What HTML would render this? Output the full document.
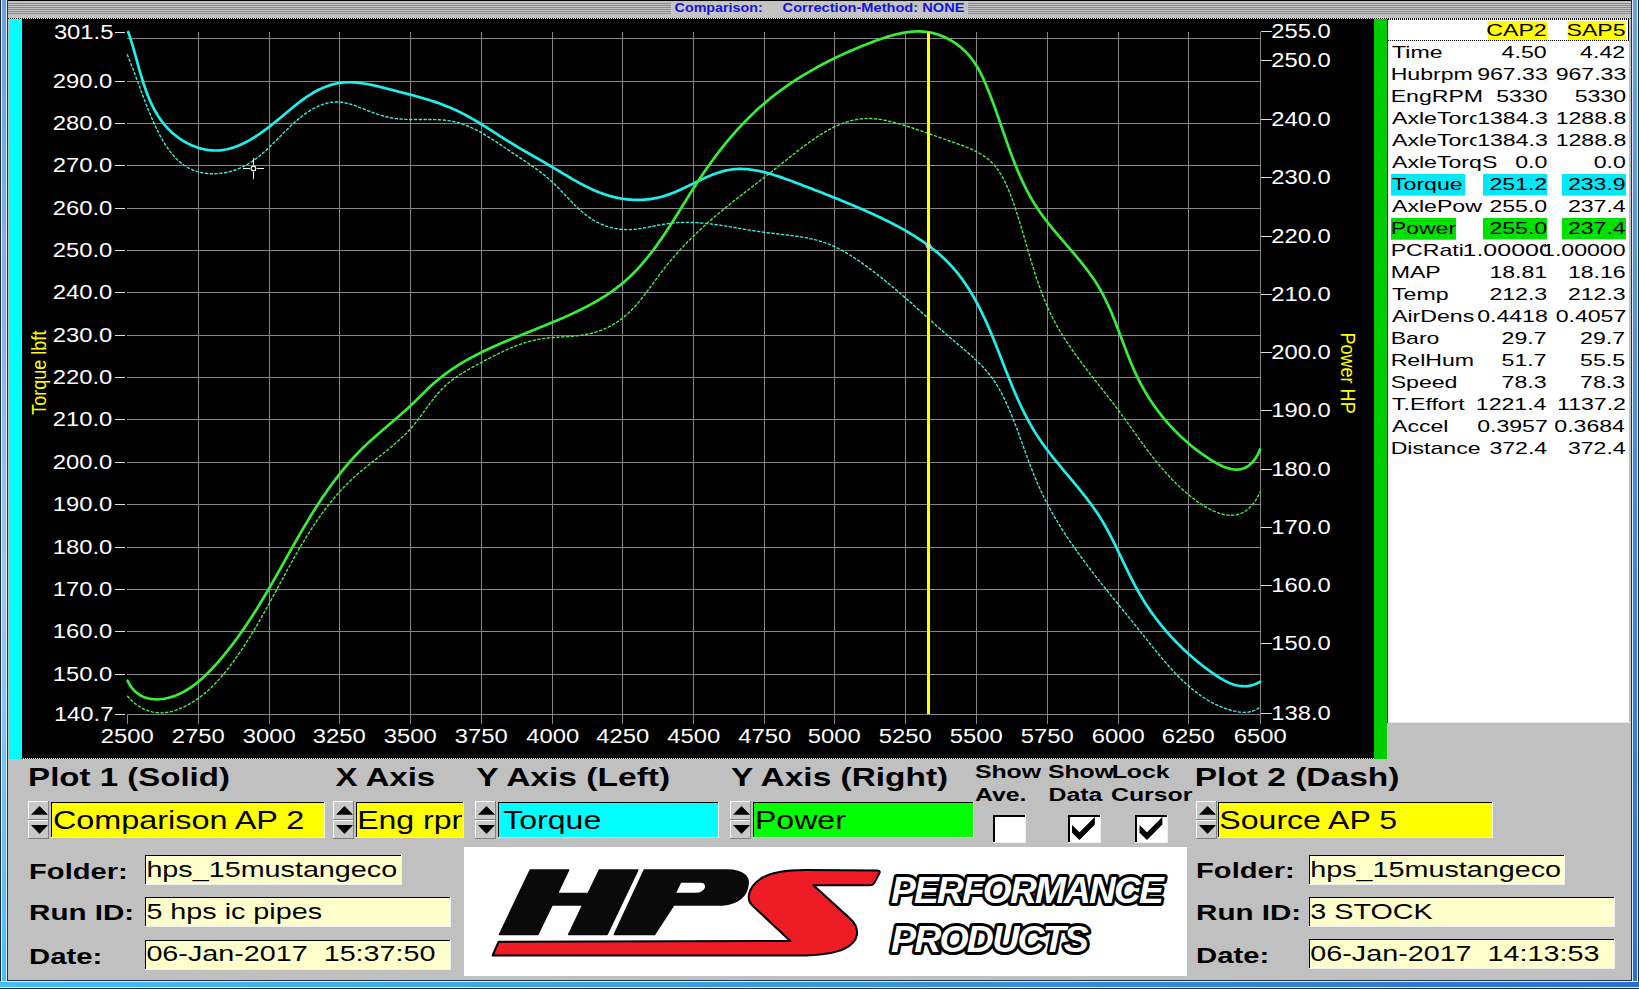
<!DOCTYPE html><html><head><meta charset="utf-8"><style>html,body{margin:0;padding:0;width:1639px;height:989px;overflow:hidden;background:#c0c0c0}</style></head><body><svg width="1639" height="989" viewBox="0 0 1639 989" style="position:absolute;left:0;top:0;white-space:pre;font-family:'Liberation Sans',sans-serif">
<defs><pattern id="stripes" x="0" y="1" width="4" height="2" patternUnits="userSpaceOnUse"><rect width="4" height="1" fill="#9a9a9a"/><rect y="1" width="4" height="1" fill="#d6d6d6"/></pattern><pattern id="dots" x="0" y="0" width="2" height="2" patternUnits="userSpaceOnUse"><rect width="1" height="2" fill="#000"/><rect x="1" width="1" height="2" fill="#e8e8e8"/></pattern><linearGradient id="lb" x1="0" y1="0" x2="0" y2="1"><stop offset="0" stop-color="#6d9fdc"/><stop offset="0.6" stop-color="#9ec6ea"/><stop offset="1" stop-color="#48bdf4"/></linearGradient><linearGradient id="bb" x1="0" y1="0" x2="1" y2="0"><stop offset="0" stop-color="#48bdf4"/><stop offset="1" stop-color="#2a72cc"/></linearGradient><linearGradient id="rb" x1="0" y1="0" x2="0" y2="1"><stop offset="0" stop-color="#6d9fdc"/><stop offset="1" stop-color="#2a72cc"/></linearGradient><clipPath id="plotclip"><rect x="22" y="19" width="1352" height="740"/></clipPath></defs>
<g shape-rendering="crispEdges">
<rect x="0" y="0" width="1639" height="989" fill="#c0c0c0" />
<rect x="0" y="0" width="8" height="989" fill="url(#lb)" />
<rect x="0" y="0" width="1" height="989" fill="#1a2a40" />
<rect x="1" y="0" width="1" height="989" fill="#d8f0ff" />
<rect x="6" y="0" width="1" height="989" fill="#d8f0ff" />
<rect x="7" y="0" width="1" height="989" fill="#203050" />
<rect x="1631" y="0" width="8" height="989" fill="url(#rb)" />
<rect x="1631" y="0" width="1" height="989" fill="#203050" />
<rect x="1632" y="0" width="1" height="989" fill="#d8f0ff" />
<rect x="1637" y="0" width="1" height="989" fill="#d8f0ff" />
<rect x="1638" y="0" width="1" height="989" fill="#1a2a40" />
<rect x="0" y="981" width="1639" height="8" fill="url(#bb)" />
<rect x="7" y="980" width="1625" height="1" fill="#203050" />
<rect x="1" y="981" width="1637" height="1" fill="#d8f0ff" />
<rect x="0" y="987" width="1639" height="1" fill="#d8f0ff" />
<rect x="0" y="988" width="1639" height="1" fill="#1a2a40" />
<rect x="8" y="0" width="1623" height="1" fill="#000" />
<rect x="8" y="1" width="1623" height="17" fill="#c2c2c2" />
<rect x="8" y="3" width="1623" height="1" fill="#8c8c8c" />
<rect x="8" y="5" width="1623" height="1" fill="#8c8c8c" />
<rect x="8" y="7" width="1623" height="1" fill="#8c8c8c" />
<rect x="8" y="9" width="1623" height="1" fill="#8c8c8c" />
<rect x="8" y="11" width="1623" height="1" fill="#8c8c8c" />
<rect x="8" y="13" width="1623" height="1" fill="#8c8c8c" />
<rect x="8" y="18" width="1623" height="1" fill="url(#dots)" />
<rect x="671" y="1" width="297" height="15" fill="#c4c4c4" />
</g>
<text transform="translate(674.60,11.70) scale(1.1000,1)" font-size="13" font-weight="bold" font-style="normal" fill="#1414d8" text-anchor="start" xml:space="preserve">Comparison:</text>
<text transform="translate(782.60,11.70) scale(1.1242,1)" font-size="13" font-weight="bold" font-style="normal" fill="#1414d8" text-anchor="start" xml:space="preserve">Correction-Method: NONE</text>
<g shape-rendering="crispEdges">
<rect x="9" y="19" width="13" height="740" fill="#00ffff" />
<rect x="22" y="19" width="1352" height="740" fill="#000" />
<rect x="1374" y="19" width="13" height="740" fill="#00cc00" />
<rect x="22" y="758" width="1352" height="1" fill="url(#dots)" />
<rect x="127" y="714" width="1" height="10" fill="#858585" />
<rect x="198" y="32" width="1" height="692" fill="#858585" />
<rect x="269" y="32" width="1" height="692" fill="#858585" />
<rect x="339" y="32" width="1" height="692" fill="#858585" />
<rect x="410" y="32" width="1" height="692" fill="#858585" />
<rect x="481" y="32" width="1" height="692" fill="#858585" />
<rect x="552" y="32" width="1" height="692" fill="#858585" />
<rect x="622" y="32" width="1" height="692" fill="#858585" />
<rect x="693" y="32" width="1" height="692" fill="#858585" />
<rect x="764" y="32" width="1" height="692" fill="#858585" />
<rect x="834" y="32" width="1" height="692" fill="#858585" />
<rect x="905" y="32" width="1" height="692" fill="#858585" />
<rect x="976" y="32" width="1" height="692" fill="#858585" />
<rect x="1047" y="32" width="1" height="692" fill="#858585" />
<rect x="1118" y="32" width="1" height="692" fill="#858585" />
<rect x="1188" y="32" width="1" height="692" fill="#858585" />
<rect x="1260" y="32" width="1" height="692" fill="#858585" />
<rect x="115" y="32" width="10" height="1" fill="#e0e0e0" />
<rect x="127" y="38" width="1134" height="1" fill="#858585" />
<rect x="127" y="81" width="1134" height="1" fill="#858585" />
<rect x="115" y="81" width="10" height="1" fill="#e0e0e0" />
<rect x="127" y="123" width="1134" height="1" fill="#858585" />
<rect x="115" y="123" width="10" height="1" fill="#e0e0e0" />
<rect x="127" y="165" width="1134" height="1" fill="#858585" />
<rect x="115" y="165" width="10" height="1" fill="#e0e0e0" />
<rect x="127" y="208" width="1134" height="1" fill="#858585" />
<rect x="115" y="208" width="10" height="1" fill="#e0e0e0" />
<rect x="127" y="250" width="1134" height="1" fill="#858585" />
<rect x="115" y="250" width="10" height="1" fill="#e0e0e0" />
<rect x="127" y="292" width="1134" height="1" fill="#858585" />
<rect x="115" y="292" width="10" height="1" fill="#e0e0e0" />
<rect x="127" y="335" width="1134" height="1" fill="#858585" />
<rect x="115" y="335" width="10" height="1" fill="#e0e0e0" />
<rect x="127" y="377" width="1134" height="1" fill="#858585" />
<rect x="115" y="377" width="10" height="1" fill="#e0e0e0" />
<rect x="127" y="419" width="1134" height="1" fill="#858585" />
<rect x="115" y="419" width="10" height="1" fill="#e0e0e0" />
<rect x="127" y="462" width="1134" height="1" fill="#858585" />
<rect x="115" y="462" width="10" height="1" fill="#e0e0e0" />
<rect x="127" y="504" width="1134" height="1" fill="#858585" />
<rect x="115" y="504" width="10" height="1" fill="#e0e0e0" />
<rect x="127" y="547" width="1134" height="1" fill="#858585" />
<rect x="115" y="547" width="10" height="1" fill="#e0e0e0" />
<rect x="127" y="589" width="1134" height="1" fill="#858585" />
<rect x="115" y="589" width="10" height="1" fill="#e0e0e0" />
<rect x="127" y="631" width="1134" height="1" fill="#858585" />
<rect x="115" y="631" width="10" height="1" fill="#e0e0e0" />
<rect x="127" y="674" width="1134" height="1" fill="#858585" />
<rect x="115" y="674" width="10" height="1" fill="#e0e0e0" />
<rect x="127" y="714" width="1134" height="1" fill="#858585" />
<rect x="115" y="714" width="10" height="1" fill="#e0e0e0" />
<rect x="1261" y="31" width="11" height="1" fill="#e0e0e0" />
<rect x="1261" y="60" width="11" height="1" fill="#e0e0e0" />
<rect x="1261" y="119" width="11" height="1" fill="#e0e0e0" />
<rect x="1261" y="177" width="11" height="1" fill="#e0e0e0" />
<rect x="1261" y="236" width="11" height="1" fill="#e0e0e0" />
<rect x="1261" y="294" width="11" height="1" fill="#e0e0e0" />
<rect x="1261" y="352" width="11" height="1" fill="#e0e0e0" />
<rect x="1261" y="410" width="11" height="1" fill="#e0e0e0" />
<rect x="1261" y="469" width="11" height="1" fill="#e0e0e0" />
<rect x="1261" y="527" width="11" height="1" fill="#e0e0e0" />
<rect x="1261" y="585" width="11" height="1" fill="#e0e0e0" />
<rect x="1261" y="643" width="11" height="1" fill="#e0e0e0" />
<rect x="1261" y="713" width="11" height="1" fill="#e0e0e0" />
</g>
<text transform="translate(53.89,38.50) scale(1.1900,1)" font-size="20" font-weight="normal" font-style="normal" fill="#ffffff" text-anchor="start" xml:space="preserve">301.5</text>
<text transform="translate(52.70,87.50) scale(1.1900,1)" font-size="20" font-weight="normal" font-style="normal" fill="#ffffff" text-anchor="start" xml:space="preserve">290.0</text>
<text transform="translate(52.70,129.50) scale(1.1900,1)" font-size="20" font-weight="normal" font-style="normal" fill="#ffffff" text-anchor="start" xml:space="preserve">280.0</text>
<text transform="translate(52.70,171.50) scale(1.1900,1)" font-size="20" font-weight="normal" font-style="normal" fill="#ffffff" text-anchor="start" xml:space="preserve">270.0</text>
<text transform="translate(52.70,214.50) scale(1.1900,1)" font-size="20" font-weight="normal" font-style="normal" fill="#ffffff" text-anchor="start" xml:space="preserve">260.0</text>
<text transform="translate(52.70,256.50) scale(1.1900,1)" font-size="20" font-weight="normal" font-style="normal" fill="#ffffff" text-anchor="start" xml:space="preserve">250.0</text>
<text transform="translate(52.70,298.50) scale(1.1900,1)" font-size="20" font-weight="normal" font-style="normal" fill="#ffffff" text-anchor="start" xml:space="preserve">240.0</text>
<text transform="translate(52.70,341.50) scale(1.1900,1)" font-size="20" font-weight="normal" font-style="normal" fill="#ffffff" text-anchor="start" xml:space="preserve">230.0</text>
<text transform="translate(52.70,383.50) scale(1.1900,1)" font-size="20" font-weight="normal" font-style="normal" fill="#ffffff" text-anchor="start" xml:space="preserve">220.0</text>
<text transform="translate(52.70,425.50) scale(1.1900,1)" font-size="20" font-weight="normal" font-style="normal" fill="#ffffff" text-anchor="start" xml:space="preserve">210.0</text>
<text transform="translate(52.70,468.50) scale(1.1900,1)" font-size="20" font-weight="normal" font-style="normal" fill="#ffffff" text-anchor="start" xml:space="preserve">200.0</text>
<text transform="translate(52.70,510.50) scale(1.1900,1)" font-size="20" font-weight="normal" font-style="normal" fill="#ffffff" text-anchor="start" xml:space="preserve">190.0</text>
<text transform="translate(52.70,553.50) scale(1.1900,1)" font-size="20" font-weight="normal" font-style="normal" fill="#ffffff" text-anchor="start" xml:space="preserve">180.0</text>
<text transform="translate(52.70,595.50) scale(1.1900,1)" font-size="20" font-weight="normal" font-style="normal" fill="#ffffff" text-anchor="start" xml:space="preserve">170.0</text>
<text transform="translate(52.70,637.50) scale(1.1900,1)" font-size="20" font-weight="normal" font-style="normal" fill="#ffffff" text-anchor="start" xml:space="preserve">160.0</text>
<text transform="translate(52.70,680.50) scale(1.1900,1)" font-size="20" font-weight="normal" font-style="normal" fill="#ffffff" text-anchor="start" xml:space="preserve">150.0</text>
<text transform="translate(53.89,720.50) scale(1.1900,1)" font-size="20" font-weight="normal" font-style="normal" fill="#ffffff" text-anchor="start" xml:space="preserve">140.7</text>
<text transform="translate(1271.31,38.00) scale(1.1900,1)" font-size="20" font-weight="normal" font-style="normal" fill="#ffffff" text-anchor="start" xml:space="preserve">255.0</text>
<text transform="translate(1271.31,67.00) scale(1.1900,1)" font-size="20" font-weight="normal" font-style="normal" fill="#ffffff" text-anchor="start" xml:space="preserve">250.0</text>
<text transform="translate(1271.31,126.00) scale(1.1900,1)" font-size="20" font-weight="normal" font-style="normal" fill="#ffffff" text-anchor="start" xml:space="preserve">240.0</text>
<text transform="translate(1271.31,184.00) scale(1.1900,1)" font-size="20" font-weight="normal" font-style="normal" fill="#ffffff" text-anchor="start" xml:space="preserve">230.0</text>
<text transform="translate(1271.31,243.00) scale(1.1900,1)" font-size="20" font-weight="normal" font-style="normal" fill="#ffffff" text-anchor="start" xml:space="preserve">220.0</text>
<text transform="translate(1271.31,301.00) scale(1.1900,1)" font-size="20" font-weight="normal" font-style="normal" fill="#ffffff" text-anchor="start" xml:space="preserve">210.0</text>
<text transform="translate(1271.31,359.00) scale(1.1900,1)" font-size="20" font-weight="normal" font-style="normal" fill="#ffffff" text-anchor="start" xml:space="preserve">200.0</text>
<text transform="translate(1271.31,417.00) scale(1.1900,1)" font-size="20" font-weight="normal" font-style="normal" fill="#ffffff" text-anchor="start" xml:space="preserve">190.0</text>
<text transform="translate(1271.31,476.00) scale(1.1900,1)" font-size="20" font-weight="normal" font-style="normal" fill="#ffffff" text-anchor="start" xml:space="preserve">180.0</text>
<text transform="translate(1271.31,534.00) scale(1.1900,1)" font-size="20" font-weight="normal" font-style="normal" fill="#ffffff" text-anchor="start" xml:space="preserve">170.0</text>
<text transform="translate(1271.31,592.00) scale(1.1900,1)" font-size="20" font-weight="normal" font-style="normal" fill="#ffffff" text-anchor="start" xml:space="preserve">160.0</text>
<text transform="translate(1271.31,650.00) scale(1.1900,1)" font-size="20" font-weight="normal" font-style="normal" fill="#ffffff" text-anchor="start" xml:space="preserve">150.0</text>
<text transform="translate(1271.31,720.00) scale(1.1900,1)" font-size="20" font-weight="normal" font-style="normal" fill="#ffffff" text-anchor="start" xml:space="preserve">138.0</text>
<text transform="translate(100.72,743.30) scale(1.1900,1)" font-size="20" font-weight="normal" font-style="normal" fill="#ffffff" text-anchor="start" xml:space="preserve">2500</text>
<text transform="translate(171.72,743.30) scale(1.1900,1)" font-size="20" font-weight="normal" font-style="normal" fill="#ffffff" text-anchor="start" xml:space="preserve">2750</text>
<text transform="translate(242.72,743.30) scale(1.1900,1)" font-size="20" font-weight="normal" font-style="normal" fill="#ffffff" text-anchor="start" xml:space="preserve">3000</text>
<text transform="translate(312.73,743.30) scale(1.1900,1)" font-size="20" font-weight="normal" font-style="normal" fill="#ffffff" text-anchor="start" xml:space="preserve">3250</text>
<text transform="translate(383.73,743.30) scale(1.1900,1)" font-size="20" font-weight="normal" font-style="normal" fill="#ffffff" text-anchor="start" xml:space="preserve">3500</text>
<text transform="translate(454.73,743.30) scale(1.1900,1)" font-size="20" font-weight="normal" font-style="normal" fill="#ffffff" text-anchor="start" xml:space="preserve">3750</text>
<text transform="translate(526.32,743.30) scale(1.1900,1)" font-size="20" font-weight="normal" font-style="normal" fill="#ffffff" text-anchor="start" xml:space="preserve">4000</text>
<text transform="translate(596.32,743.30) scale(1.1900,1)" font-size="20" font-weight="normal" font-style="normal" fill="#ffffff" text-anchor="start" xml:space="preserve">4250</text>
<text transform="translate(667.32,743.30) scale(1.1900,1)" font-size="20" font-weight="normal" font-style="normal" fill="#ffffff" text-anchor="start" xml:space="preserve">4500</text>
<text transform="translate(738.32,743.30) scale(1.1900,1)" font-size="20" font-weight="normal" font-style="normal" fill="#ffffff" text-anchor="start" xml:space="preserve">4750</text>
<text transform="translate(807.73,743.30) scale(1.1900,1)" font-size="20" font-weight="normal" font-style="normal" fill="#ffffff" text-anchor="start" xml:space="preserve">5000</text>
<text transform="translate(878.73,743.30) scale(1.1900,1)" font-size="20" font-weight="normal" font-style="normal" fill="#ffffff" text-anchor="start" xml:space="preserve">5250</text>
<text transform="translate(949.73,743.30) scale(1.1900,1)" font-size="20" font-weight="normal" font-style="normal" fill="#ffffff" text-anchor="start" xml:space="preserve">5500</text>
<text transform="translate(1020.73,743.30) scale(1.1900,1)" font-size="20" font-weight="normal" font-style="normal" fill="#ffffff" text-anchor="start" xml:space="preserve">5750</text>
<text transform="translate(1091.72,743.30) scale(1.1900,1)" font-size="20" font-weight="normal" font-style="normal" fill="#ffffff" text-anchor="start" xml:space="preserve">6000</text>
<text transform="translate(1161.72,743.30) scale(1.1900,1)" font-size="20" font-weight="normal" font-style="normal" fill="#ffffff" text-anchor="start" xml:space="preserve">6250</text>
<text transform="translate(1233.72,743.30) scale(1.1900,1)" font-size="20" font-weight="normal" font-style="normal" fill="#ffffff" text-anchor="start" xml:space="preserve">6500</text>
<text transform="translate(46.3,414.9) rotate(-90) scale(0.86,1)" font-size="21" fill="#ffff00">Torque lbft</text>
<text transform="translate(1340.5,332.4) rotate(90) scale(0.86,1)" font-size="21" fill="#ffff00">Power HP</text>
<g clip-path="url(#plotclip)" fill="none" stroke-linejoin="round" stroke-linecap="round">
<path d="M127.30,54.80 L127.90,56.25 L128.49,57.68 L129.08,59.11 L129.65,60.53 L130.22,61.95 L130.78,63.36 L131.33,64.76 L131.88,66.16 L132.42,67.55 L132.95,68.94 L133.48,70.32 L134.00,71.70 L134.52,73.08 L135.03,74.45 L135.54,75.82 L136.05,77.19 L136.56,78.55 L137.06,79.92 L137.56,81.28 L138.06,82.63 L138.55,83.99 L139.05,85.35 L139.55,86.71 L140.04,88.06 L140.54,89.42 L141.04,90.78 L141.54,92.13 L142.04,93.49 L142.55,94.86 L143.06,96.22 L143.57,97.58 L144.08,98.95 L144.60,100.32 L145.13,101.69 L145.65,103.07 L146.19,104.45 L146.73,105.84 L147.28,107.23 L147.83,108.62 L148.39,110.02 L148.96,111.42 L149.54,112.83 L150.12,114.25 L150.72,115.67 L151.32,117.10 L151.94,118.54 L152.56,119.98 L153.19,121.43 L153.84,122.87 L154.50,124.32 L155.16,125.77 L155.84,127.22 L156.53,128.67 L157.24,130.11 L157.95,131.55 L158.68,132.98 L159.42,134.41 L160.17,135.83 L160.94,137.24 L161.72,138.64 L162.52,140.02 L163.32,141.40 L164.15,142.76 L164.99,144.11 L165.84,145.44 L166.71,146.75 L167.59,148.04 L168.49,149.32 L169.41,150.57 L170.34,151.80 L171.29,153.01 L172.26,154.19 L173.25,155.35 L174.25,156.48 L175.27,157.58 L176.30,158.66 L177.36,159.70 L178.44,160.71 L179.53,161.69 L180.64,162.64 L181.78,163.55 L182.93,164.42 L184.10,165.26 L185.29,166.05 L186.51,166.81 L187.74,167.53 L188.99,168.20 L190.27,168.84 L191.56,169.44 L192.87,169.99 L194.19,170.51 L195.53,170.99 L196.89,171.43 L198.26,171.83 L199.64,172.19 L201.03,172.51 L202.44,172.80 L203.85,173.05 L205.28,173.26 L206.71,173.44 L208.15,173.58 L209.60,173.68 L211.05,173.75 L212.51,173.78 L213.97,173.78 L215.44,173.74 L216.91,173.67 L218.38,173.57 L219.85,173.43 L221.32,173.25 L222.79,173.05 L224.25,172.81 L225.72,172.53 L227.18,172.23 L228.63,171.89 L230.08,171.53 L231.53,171.13 L232.96,170.69 L234.39,170.23 L235.81,169.74 L237.22,169.22 L238.61,168.67 L240.00,168.09 L241.37,167.47 L242.73,166.83 L244.08,166.17 L245.41,165.47 L246.72,164.74 L248.02,163.99 L249.31,163.22 L250.58,162.41 L251.84,161.59 L253.09,160.74 L254.32,159.87 L255.55,158.98 L256.76,158.07 L257.96,157.14 L259.15,156.19 L260.33,155.22 L261.51,154.24 L262.67,153.24 L263.83,152.23 L264.98,151.20 L266.12,150.16 L267.25,149.12 L268.39,148.05 L269.51,146.98 L270.63,145.91 L271.75,144.82 L272.86,143.73 L273.97,142.63 L275.08,141.52 L276.18,140.41 L277.29,139.30 L278.39,138.19 L279.49,137.08 L280.59,135.96 L281.70,134.85 L282.80,133.74 L283.91,132.63 L285.02,131.52 L286.13,130.42 L287.24,129.32 L288.36,128.23 L289.48,127.15 L290.61,126.08 L291.74,125.01 L292.88,123.96 L294.02,122.92 L295.18,121.88 L296.33,120.87 L297.50,119.86 L298.68,118.87 L299.86,117.90 L301.06,116.94 L302.26,116.00 L303.48,115.09 L304.70,114.19 L305.94,113.31 L307.18,112.45 L308.43,111.62 L309.69,110.82 L310.96,110.04 L312.24,109.29 L313.52,108.56 L314.81,107.87 L316.11,107.21 L317.42,106.58 L318.73,105.99 L320.05,105.43 L321.37,104.91 L322.70,104.42 L324.04,103.98 L325.38,103.57 L326.72,103.21 L328.07,102.89 L329.43,102.61 L330.79,102.38 L332.15,102.20 L333.52,102.06 L334.89,101.97 L336.26,101.93 L337.64,101.95 L339.01,102.01 L340.39,102.13 L341.78,102.29 L343.16,102.50 L344.55,102.75 L345.94,103.04 L347.33,103.36 L348.73,103.72 L350.13,104.12 L351.53,104.54 L352.93,104.98 L354.34,105.46 L355.74,105.95 L357.16,106.46 L358.57,106.99 L359.98,107.53 L361.40,108.08 L362.82,108.64 L364.25,109.21 L365.67,109.78 L367.10,110.34 L368.53,110.91 L369.97,111.48 L371.40,112.03 L372.84,112.58 L374.28,113.11 L375.73,113.63 L377.17,114.13 L378.62,114.61 L380.07,115.07 L381.53,115.51 L382.99,115.93 L384.45,116.33 L385.91,116.70 L387.38,117.05 L388.85,117.37 L390.32,117.67 L391.80,117.94 L393.29,118.18 L394.77,118.40 L396.26,118.59 L397.75,118.77 L399.25,118.92 L400.74,119.05 L402.24,119.16 L403.75,119.25 L405.25,119.33 L406.75,119.39 L408.26,119.44 L409.77,119.48 L411.28,119.51 L412.78,119.53 L414.29,119.54 L415.80,119.54 L417.31,119.54 L418.82,119.54 L420.33,119.53 L421.84,119.52 L423.34,119.51 L424.85,119.50 L426.35,119.50 L427.85,119.50 L429.35,119.50 L430.85,119.51 L432.35,119.53 L433.84,119.56 L435.33,119.60 L436.81,119.65 L438.30,119.72 L439.77,119.80 L441.25,119.90 L442.72,120.01 L444.19,120.14 L445.65,120.29 L447.11,120.47 L448.56,120.66 L450.01,120.89 L451.45,121.13 L452.88,121.40 L454.31,121.71 L455.74,122.04 L457.15,122.40 L458.56,122.78 L459.97,123.20 L461.37,123.64 L462.76,124.11 L464.15,124.60 L465.53,125.12 L466.90,125.66 L468.28,126.23 L469.64,126.81 L471.00,127.42 L472.36,128.04 L473.71,128.69 L475.05,129.35 L476.40,130.03 L477.73,130.73 L479.06,131.44 L480.39,132.17 L481.72,132.92 L483.04,133.67 L484.35,134.44 L485.66,135.22 L486.97,136.01 L488.28,136.81 L489.58,137.62 L490.88,138.44 L492.17,139.27 L493.46,140.10 L494.75,140.94 L496.04,141.79 L497.32,142.64 L498.60,143.49 L499.88,144.34 L501.15,145.20 L502.42,146.06 L503.69,146.91 L504.96,147.77 L506.23,148.62 L507.49,149.48 L508.75,150.32 L510.01,151.17 L511.27,152.01 L512.53,152.85 L513.79,153.68 L515.04,154.51 L516.29,155.33 L517.54,156.15 L518.78,156.98 L520.03,157.80 L521.27,158.62 L522.51,159.44 L523.74,160.26 L524.97,161.08 L526.20,161.91 L527.42,162.73 L528.64,163.56 L529.86,164.40 L531.07,165.23 L532.28,166.08 L533.48,166.93 L534.68,167.78 L535.87,168.64 L537.06,169.51 L538.24,170.39 L539.41,171.27 L540.58,172.16 L541.75,173.07 L542.91,173.98 L544.06,174.90 L545.21,175.84 L546.35,176.79 L547.48,177.75 L548.61,178.72 L549.73,179.71 L550.84,180.71 L551.94,181.72 L553.04,182.75 L554.13,183.80 L555.22,184.86 L556.30,185.92 L557.37,187.00 L558.44,188.09 L559.51,189.18 L560.57,190.29 L561.63,191.39 L562.69,192.51 L563.75,193.62 L564.81,194.74 L565.87,195.86 L566.93,196.97 L567.99,198.09 L569.05,199.20 L570.12,200.31 L571.18,201.41 L572.26,202.51 L573.33,203.60 L574.42,204.68 L575.50,205.75 L576.60,206.81 L577.70,207.86 L578.81,208.90 L579.92,209.92 L581.05,210.92 L582.19,211.91 L583.33,212.88 L584.49,213.83 L585.66,214.76 L586.84,215.66 L588.03,216.55 L589.23,217.41 L590.45,218.25 L591.69,219.05 L592.94,219.84 L594.20,220.59 L595.48,221.32 L596.77,222.01 L598.08,222.68 L599.40,223.32 L600.73,223.93 L602.08,224.50 L603.44,225.05 L604.81,225.57 L606.19,226.06 L607.58,226.52 L608.98,226.95 L610.38,227.34 L611.80,227.71 L613.23,228.05 L614.66,228.35 L616.10,228.62 L617.55,228.86 L619.00,229.07 L620.46,229.24 L621.93,229.39 L623.40,229.50 L624.87,229.57 L626.35,229.62 L627.83,229.63 L629.31,229.60 L630.80,229.55 L632.29,229.46 L633.78,229.35 L635.27,229.21 L636.77,229.04 L638.26,228.86 L639.76,228.65 L641.26,228.42 L642.76,228.18 L644.26,227.93 L645.76,227.66 L647.26,227.38 L648.77,227.09 L650.27,226.80 L651.77,226.50 L653.28,226.20 L654.78,225.90 L656.28,225.60 L657.79,225.31 L659.29,225.02 L660.79,224.74 L662.29,224.47 L663.79,224.22 L665.29,223.97 L666.78,223.74 L668.28,223.54 L669.77,223.34 L671.26,223.17 L672.75,223.02 L674.24,222.88 L675.73,222.76 L677.21,222.66 L678.70,222.57 L680.18,222.50 L681.67,222.44 L683.15,222.40 L684.63,222.38 L686.11,222.36 L687.58,222.37 L689.06,222.38 L690.54,222.41 L692.01,222.45 L693.49,222.51 L694.96,222.58 L696.44,222.66 L697.91,222.75 L699.38,222.85 L700.86,222.96 L702.33,223.08 L703.80,223.21 L705.27,223.35 L706.74,223.50 L708.21,223.66 L709.68,223.83 L711.16,224.00 L712.63,224.19 L714.10,224.38 L715.57,224.57 L717.04,224.78 L718.51,224.98 L719.98,225.20 L721.46,225.42 L722.93,225.64 L724.40,225.87 L725.88,226.10 L727.35,226.34 L728.83,226.58 L730.30,226.82 L731.78,227.07 L733.26,227.32 L734.74,227.56 L736.21,227.82 L737.69,228.07 L739.18,228.32 L740.66,228.57 L742.14,228.82 L743.63,229.08 L745.11,229.33 L746.60,229.58 L748.09,229.82 L749.58,230.07 L751.07,230.31 L752.56,230.55 L754.06,230.79 L755.56,231.02 L757.05,231.25 L758.55,231.48 L760.06,231.70 L761.56,231.92 L763.07,232.13 L764.57,232.33 L766.08,232.53 L767.60,232.72 L769.11,232.91 L770.62,233.09 L772.14,233.27 L773.66,233.45 L775.17,233.62 L776.69,233.80 L778.21,233.97 L779.73,234.14 L781.24,234.31 L782.76,234.48 L784.28,234.66 L785.79,234.84 L787.30,235.02 L788.82,235.20 L790.33,235.39 L791.83,235.58 L793.34,235.78 L794.84,235.98 L796.34,236.19 L797.84,236.41 L799.34,236.64 L800.83,236.88 L802.31,237.12 L803.80,237.38 L805.28,237.64 L806.75,237.92 L808.22,238.21 L809.69,238.51 L811.15,238.83 L812.60,239.16 L814.05,239.51 L815.50,239.87 L816.93,240.24 L818.37,240.64 L819.79,241.05 L821.21,241.48 L822.62,241.92 L824.02,242.39 L825.42,242.87 L826.81,243.38 L828.19,243.91 L829.56,244.46 L830.93,245.03 L832.28,245.61 L833.63,246.22 L834.98,246.84 L836.31,247.48 L837.64,248.14 L838.97,248.82 L840.28,249.51 L841.59,250.21 L842.89,250.93 L844.19,251.66 L845.48,252.41 L846.77,253.16 L848.05,253.93 L849.32,254.71 L850.59,255.50 L851.86,256.31 L853.12,257.12 L854.37,257.94 L855.62,258.76 L856.86,259.60 L858.10,260.44 L859.34,261.29 L860.57,262.14 L861.80,263.00 L863.02,263.86 L864.24,264.73 L865.46,265.60 L866.67,266.48 L867.88,267.37 L869.09,268.25 L870.29,269.15 L871.49,270.04 L872.68,270.95 L873.87,271.85 L875.06,272.76 L876.25,273.68 L877.43,274.60 L878.61,275.52 L879.78,276.45 L880.96,277.38 L882.13,278.31 L883.30,279.25 L884.46,280.19 L885.62,281.14 L886.78,282.09 L887.94,283.04 L889.10,283.99 L890.25,284.95 L891.40,285.91 L892.55,286.88 L893.70,287.84 L894.84,288.81 L895.98,289.78 L897.12,290.76 L898.26,291.73 L899.40,292.71 L900.54,293.69 L901.67,294.68 L902.81,295.66 L903.94,296.65 L905.07,297.64 L906.20,298.63 L907.33,299.62 L908.45,300.61 L909.58,301.61 L910.70,302.60 L911.83,303.60 L912.95,304.60 L914.07,305.60 L915.20,306.60 L916.32,307.60 L917.44,308.60 L918.56,309.61 L919.68,310.61 L920.80,311.61 L921.92,312.62 L923.04,313.62 L924.16,314.63 L925.28,315.63 L926.40,316.63 L927.52,317.64 L928.64,318.64 L929.76,319.65 L930.88,320.65 L932.00,321.65 L933.13,322.66 L934.25,323.66 L935.37,324.66 L936.50,325.66 L937.62,326.66 L938.75,327.65 L939.87,328.65 L941.00,329.65 L942.13,330.64 L943.26,331.63 L944.39,332.62 L945.53,333.61 L946.66,334.60 L947.80,335.59 L948.93,336.57 L950.07,337.55 L951.22,338.53 L952.36,339.51 L953.50,340.48 L954.65,341.46 L955.80,342.43 L956.95,343.40 L958.09,344.37 L959.24,345.33 L960.39,346.30 L961.54,347.27 L962.68,348.24 L963.82,349.21 L964.96,350.19 L966.09,351.16 L967.23,352.14 L968.35,353.12 L969.47,354.10 L970.59,355.09 L971.70,356.08 L972.80,357.08 L973.90,358.08 L974.98,359.09 L976.06,360.11 L977.13,361.13 L978.20,362.16 L979.25,363.19 L980.29,364.24 L981.32,365.29 L982.34,366.35 L983.34,367.42 L984.34,368.50 L985.32,369.59 L986.29,370.69 L987.24,371.81 L988.18,372.93 L989.10,374.07 L990.01,375.21 L990.90,376.38 L991.78,377.55 L992.63,378.74 L993.48,379.94 L994.31,381.15 L995.12,382.37 L995.92,383.60 L996.71,384.85 L997.48,386.10 L998.24,387.37 L998.98,388.65 L999.72,389.93 L1000.44,391.23 L1001.15,392.53 L1001.85,393.84 L1002.54,395.16 L1003.21,396.49 L1003.88,397.83 L1004.54,399.18 L1005.18,400.53 L1005.82,401.89 L1006.45,403.25 L1007.08,404.63 L1007.69,406.00 L1008.30,407.39 L1008.89,408.78 L1009.49,410.17 L1010.07,411.57 L1010.65,412.97 L1011.23,414.38 L1011.80,415.79 L1012.36,417.20 L1012.92,418.62 L1013.48,420.04 L1014.03,421.46 L1014.58,422.89 L1015.12,424.31 L1015.67,425.74 L1016.20,427.17 L1016.74,428.60 L1017.28,430.04 L1017.81,431.47 L1018.34,432.91 L1018.86,434.35 L1019.39,435.79 L1019.92,437.23 L1020.44,438.67 L1020.96,440.11 L1021.48,441.55 L1022.00,442.99 L1022.53,444.43 L1023.05,445.87 L1023.57,447.31 L1024.09,448.75 L1024.61,450.19 L1025.13,451.63 L1025.66,453.07 L1026.18,454.51 L1026.71,455.94 L1027.24,457.37 L1027.77,458.81 L1028.30,460.24 L1028.83,461.67 L1029.37,463.09 L1029.91,464.52 L1030.45,465.94 L1030.99,467.36 L1031.54,468.78 L1032.09,470.19 L1032.65,471.60 L1033.21,473.01 L1033.77,474.42 L1034.34,475.82 L1034.91,477.22 L1035.49,478.61 L1036.08,480.00 L1036.66,481.39 L1037.26,482.77 L1037.86,484.15 L1038.46,485.52 L1039.07,486.89 L1039.69,488.26 L1040.31,489.62 L1040.94,490.97 L1041.58,492.32 L1042.22,493.67 L1042.87,495.01 L1043.52,496.34 L1044.18,497.68 L1044.84,499.01 L1045.51,500.33 L1046.19,501.65 L1046.87,502.97 L1047.56,504.28 L1048.25,505.59 L1048.95,506.89 L1049.65,508.19 L1050.36,509.49 L1051.08,510.78 L1051.79,512.07 L1052.52,513.36 L1053.25,514.64 L1053.98,515.92 L1054.72,517.19 L1055.47,518.46 L1056.21,519.73 L1056.97,521.00 L1057.73,522.26 L1058.49,523.52 L1059.26,524.77 L1060.03,526.02 L1060.81,527.27 L1061.59,528.52 L1062.38,529.76 L1063.17,531.00 L1063.96,532.24 L1064.76,533.48 L1065.56,534.71 L1066.37,535.94 L1067.18,537.16 L1068.00,538.39 L1068.82,539.61 L1069.64,540.83 L1070.47,542.05 L1071.30,543.26 L1072.13,544.48 L1072.97,545.69 L1073.82,546.89 L1074.66,548.10 L1075.51,549.31 L1076.37,550.51 L1077.22,551.71 L1078.08,552.91 L1078.95,554.10 L1079.81,555.30 L1080.68,556.49 L1081.56,557.68 L1082.43,558.87 L1083.31,560.06 L1084.19,561.25 L1085.08,562.44 L1085.97,563.62 L1086.86,564.80 L1087.75,565.99 L1088.65,567.17 L1089.55,568.35 L1090.45,569.52 L1091.36,570.70 L1092.26,571.88 L1093.17,573.05 L1094.09,574.23 L1095.00,575.40 L1095.92,576.58 L1096.84,577.75 L1097.76,578.92 L1098.68,580.09 L1099.61,581.26 L1100.54,582.43 L1101.47,583.60 L1102.40,584.77 L1103.33,585.94 L1104.27,587.11 L1105.20,588.28 L1106.14,589.45 L1107.08,590.62 L1108.03,591.78 L1108.97,592.95 L1109.92,594.12 L1110.86,595.29 L1111.81,596.46 L1112.76,597.63 L1113.71,598.80 L1114.67,599.97 L1115.62,601.14 L1116.57,602.31 L1117.53,603.48 L1118.49,604.65 L1119.44,605.83 L1120.40,607.00 L1121.36,608.17 L1122.32,609.35 L1123.28,610.52 L1124.25,611.70 L1125.21,612.88 L1126.17,614.06 L1127.14,615.24 L1128.10,616.42 L1129.07,617.60 L1130.03,618.78 L1131.00,619.97 L1131.96,621.15 L1132.93,622.34 L1133.90,623.53 L1134.86,624.72 L1135.83,625.91 L1136.79,627.11 L1137.76,628.30 L1138.73,629.50 L1139.69,630.70 L1140.66,631.90 L1141.63,633.10 L1142.59,634.31 L1143.56,635.51 L1144.52,636.72 L1145.49,637.93 L1146.45,639.14 L1147.42,640.35 L1148.39,641.56 L1149.36,642.77 L1150.33,643.98 L1151.30,645.18 L1152.27,646.39 L1153.24,647.60 L1154.21,648.80 L1155.19,650.00 L1156.17,651.20 L1157.14,652.40 L1158.13,653.59 L1159.11,654.78 L1160.10,655.97 L1161.08,657.15 L1162.07,658.33 L1163.07,659.50 L1164.06,660.67 L1165.06,661.84 L1166.07,663.00 L1167.07,664.15 L1168.08,665.30 L1169.10,666.44 L1170.11,667.58 L1171.13,668.71 L1172.16,669.83 L1173.19,670.95 L1174.22,672.05 L1175.26,673.15 L1176.30,674.24 L1177.35,675.33 L1178.40,676.40 L1179.46,677.46 L1180.52,678.52 L1181.58,679.57 L1182.66,680.60 L1183.74,681.63 L1184.82,682.64 L1185.91,683.64 L1187.01,684.64 L1188.11,685.62 L1189.22,686.59 L1190.33,687.54 L1191.45,688.49 L1192.58,689.42 L1193.71,690.34 L1194.86,691.25 L1196.00,692.14 L1197.16,693.02 L1198.32,693.88 L1199.50,694.73 L1200.67,695.57 L1201.86,696.39 L1203.06,697.19 L1204.26,697.98 L1205.47,698.76 L1206.69,699.51 L1207.92,700.25 L1209.15,700.98 L1210.40,701.68 L1211.65,702.37 L1212.92,703.05 L1214.19,703.70 L1215.47,704.34 L1216.76,704.95 L1218.07,705.55 L1219.38,706.13 L1220.70,706.69 L1222.03,707.23 L1223.37,707.75 L1224.72,708.25 L1226.09,708.73 L1227.46,709.18 L1228.84,709.62 L1230.24,710.04 L1231.64,710.43 L1233.06,710.80 L1234.49,711.14 L1235.92,711.45 L1237.36,711.72 L1238.81,711.95 L1240.25,712.13 L1241.71,712.26 L1243.16,712.33 L1244.61,712.34 L1246.06,712.29 L1247.51,712.16 L1248.95,711.96 L1250.38,711.68 L1251.81,711.32 L1253.23,710.86 L1254.64,710.32 L1256.03,709.67 L1257.42,708.92 L1258.78,708.06 L1260.14,707.09" stroke="#40ecd8" stroke-width="1.4" stroke-dasharray="2.2 2.6"/>
<path d="M127.60,696.27 L128.69,697.54 L129.81,698.76 L130.96,699.92 L132.13,701.04 L133.32,702.12 L134.54,703.14 L135.78,704.11 L137.04,705.03 L138.32,705.90 L139.61,706.72 L140.93,707.49 L142.26,708.21 L143.60,708.88 L144.96,709.50 L146.33,710.06 L147.71,710.58 L149.11,711.04 L150.51,711.45 L151.92,711.81 L153.34,712.11 L154.77,712.37 L156.20,712.57 L157.63,712.72 L159.07,712.81 L160.51,712.85 L161.95,712.84 L163.38,712.78 L164.82,712.66 L166.26,712.49 L167.69,712.28 L169.12,712.01 L170.54,711.71 L171.96,711.36 L173.37,710.97 L174.78,710.54 L176.18,710.08 L177.56,709.58 L178.95,709.05 L180.32,708.49 L181.68,707.90 L183.02,707.29 L184.36,706.65 L185.68,706.00 L186.99,705.32 L188.29,704.62 L189.58,703.90 L190.85,703.16 L192.11,702.40 L193.36,701.63 L194.59,700.83 L195.82,700.02 L197.03,699.19 L198.23,698.34 L199.42,697.47 L200.60,696.59 L201.76,695.69 L202.92,694.78 L204.06,693.84 L205.20,692.90 L206.32,691.94 L207.44,690.96 L208.54,689.97 L209.63,688.97 L210.72,687.96 L211.79,686.93 L212.85,685.88 L213.91,684.83 L214.95,683.76 L215.99,682.69 L217.02,681.60 L218.04,680.50 L219.04,679.39 L220.05,678.27 L221.04,677.14 L222.02,676.00 L223.00,674.85 L223.97,673.70 L224.93,672.53 L225.89,671.36 L226.83,670.18 L227.77,668.99 L228.70,667.80 L229.63,666.60 L230.55,665.39 L231.46,664.18 L232.36,662.97 L233.26,661.74 L234.16,660.52 L235.04,659.29 L235.92,658.05 L236.80,656.82 L237.67,655.58 L238.53,654.33 L239.39,653.08 L240.25,651.83 L241.09,650.58 L241.94,649.32 L242.78,648.06 L243.61,646.79 L244.44,645.53 L245.26,644.26 L246.08,642.98 L246.89,641.71 L247.70,640.43 L248.51,639.15 L249.31,637.86 L250.11,636.58 L250.90,635.29 L251.69,634.00 L252.48,632.70 L253.26,631.41 L254.04,630.11 L254.81,628.81 L255.58,627.51 L256.35,626.21 L257.12,624.90 L257.88,623.59 L258.64,622.28 L259.39,620.97 L260.15,619.66 L260.90,618.35 L261.64,617.03 L262.39,615.72 L263.13,614.40 L263.87,613.08 L264.61,611.76 L265.35,610.44 L266.08,609.12 L266.81,607.79 L267.54,606.47 L268.27,605.15 L269.00,603.82 L269.72,602.50 L270.45,601.17 L271.17,599.84 L271.89,598.52 L272.61,597.19 L273.33,595.86 L274.05,594.53 L274.77,593.20 L275.48,591.88 L276.20,590.55 L276.92,589.22 L277.63,587.89 L278.35,586.56 L279.06,585.24 L279.78,583.91 L280.49,582.58 L281.21,581.26 L281.92,579.93 L282.64,578.61 L283.35,577.29 L284.07,575.96 L284.78,574.64 L285.50,573.32 L286.22,572.00 L286.94,570.68 L287.66,569.36 L288.38,568.05 L289.10,566.73 L289.83,565.42 L290.55,564.11 L291.28,562.80 L292.01,561.49 L292.74,560.18 L293.47,558.88 L294.20,557.57 L294.94,556.27 L295.67,554.97 L296.41,553.68 L297.16,552.38 L297.90,551.09 L298.65,549.80 L299.40,548.51 L300.15,547.22 L300.90,545.94 L301.66,544.66 L302.42,543.38 L303.19,542.11 L303.96,540.83 L304.73,539.56 L305.50,538.30 L306.28,537.03 L307.06,535.77 L307.84,534.52 L308.63,533.26 L309.42,532.01 L310.22,530.76 L311.02,529.52 L311.83,528.28 L312.64,527.04 L313.45,525.81 L314.27,524.58 L315.09,523.35 L315.92,522.13 L316.75,520.91 L317.59,519.70 L318.43,518.49 L319.27,517.29 L320.13,516.08 L320.98,514.89 L321.85,513.70 L322.72,512.51 L323.59,511.32 L324.47,510.15 L325.36,508.97 L326.25,507.80 L327.15,506.64 L328.05,505.48 L328.96,504.32 L329.88,503.17 L330.80,502.03 L331.73,500.89 L332.66,499.76 L333.60,498.63 L334.55,497.51 L335.51,496.39 L336.47,495.28 L337.44,494.17 L338.42,493.07 L339.41,491.97 L340.40,490.89 L341.40,489.80 L342.41,488.73 L343.42,487.65 L344.44,486.59 L345.47,485.53 L346.51,484.48 L347.56,483.43 L348.61,482.39 L349.68,481.36 L350.75,480.33 L351.83,479.31 L352.92,478.30 L354.02,477.29 L355.12,476.30 L356.24,475.30 L357.36,474.32 L358.49,473.34 L359.63,472.36 L360.78,471.39 L361.93,470.43 L363.09,469.47 L364.25,468.51 L365.42,467.56 L366.59,466.61 L367.77,465.66 L368.95,464.72 L370.13,463.78 L371.32,462.84 L372.51,461.90 L373.70,460.96 L374.89,460.02 L376.09,459.09 L377.28,458.15 L378.47,457.21 L379.67,456.28 L380.86,455.34 L382.05,454.39 L383.24,453.45 L384.43,452.51 L385.62,451.56 L386.80,450.60 L387.98,449.65 L389.16,448.69 L390.33,447.73 L391.49,446.76 L392.65,445.78 L393.81,444.80 L394.96,443.82 L396.10,442.83 L397.24,441.83 L398.37,440.82 L399.49,439.81 L400.60,438.79 L401.70,437.76 L402.80,436.73 L403.88,435.68 L404.95,434.63 L406.02,433.56 L407.07,432.48 L408.11,431.40 L409.14,430.30 L410.16,429.19 L411.16,428.08 L412.15,426.94 L413.13,425.80 L414.09,424.65 L415.04,423.48 L415.98,422.30 L416.92,421.12 L417.84,419.93 L418.75,418.73 L419.66,417.53 L420.56,416.32 L421.46,415.10 L422.35,413.89 L423.24,412.67 L424.12,411.45 L425.01,410.23 L425.89,409.01 L426.77,407.79 L427.66,406.58 L428.55,405.36 L429.44,404.16 L430.33,402.95 L431.23,401.76 L432.13,400.57 L433.05,399.38 L433.97,398.21 L434.90,397.05 L435.83,395.90 L436.78,394.75 L437.74,393.63 L438.71,392.51 L439.70,391.41 L440.70,390.32 L441.72,389.25 L442.75,388.20 L443.80,387.17 L444.86,386.15 L445.95,385.16 L447.05,384.18 L448.17,383.22 L449.31,382.28 L450.46,381.35 L451.63,380.44 L452.81,379.55 L454.01,378.67 L455.22,377.81 L456.44,376.96 L457.68,376.12 L458.93,375.30 L460.18,374.48 L461.45,373.68 L462.73,372.89 L464.02,372.11 L465.31,371.33 L466.61,370.57 L467.92,369.81 L469.24,369.06 L470.56,368.32 L471.89,367.58 L473.22,366.85 L474.55,366.12 L475.89,365.40 L477.23,364.67 L478.58,363.96 L479.92,363.24 L481.27,362.52 L482.61,361.81 L483.96,361.10 L485.30,360.39 L486.65,359.68 L488.00,358.97 L489.35,358.27 L490.69,357.57 L492.04,356.87 L493.39,356.18 L494.75,355.49 L496.10,354.81 L497.45,354.14 L498.81,353.47 L500.17,352.81 L501.53,352.15 L502.89,351.51 L504.26,350.87 L505.62,350.24 L506.99,349.62 L508.37,349.01 L509.74,348.42 L511.12,347.83 L512.50,347.25 L513.88,346.69 L515.27,346.14 L516.66,345.60 L518.06,345.07 L519.45,344.56 L520.86,344.06 L522.26,343.58 L523.67,343.11 L525.09,342.66 L526.51,342.23 L527.93,341.81 L529.36,341.41 L530.79,341.03 L532.23,340.66 L533.67,340.32 L535.12,339.99 L536.57,339.69 L538.03,339.40 L539.50,339.13 L540.97,338.89 L542.44,338.67 L543.92,338.46 L545.41,338.27 L546.90,338.10 L548.39,337.94 L549.89,337.80 L551.39,337.67 L552.90,337.55 L554.40,337.43 L555.91,337.33 L557.42,337.23 L558.93,337.13 L560.44,337.04 L561.96,336.95 L563.47,336.85 L564.98,336.76 L566.49,336.67 L568.00,336.57 L569.51,336.46 L571.02,336.35 L572.52,336.23 L574.02,336.10 L575.52,335.96 L577.02,335.81 L578.51,335.64 L580.00,335.45 L581.48,335.25 L582.96,335.03 L584.43,334.79 L585.90,334.53 L587.36,334.25 L588.82,333.94 L590.26,333.61 L591.70,333.25 L593.14,332.87 L594.56,332.46 L595.98,332.03 L597.38,331.58 L598.78,331.10 L600.17,330.60 L601.55,330.08 L602.92,329.53 L604.28,328.96 L605.62,328.36 L606.96,327.74 L608.28,327.10 L609.60,326.44 L610.89,325.75 L612.18,325.05 L613.45,324.32 L614.71,323.56 L615.96,322.79 L617.19,322.00 L618.40,321.18 L619.60,320.34 L620.79,319.48 L621.95,318.60 L623.11,317.70 L624.24,316.77 L625.36,315.83 L626.47,314.87 L627.56,313.89 L628.64,312.89 L629.70,311.88 L630.75,310.85 L631.79,309.80 L632.82,308.74 L633.83,307.66 L634.84,306.57 L635.84,305.47 L636.82,304.35 L637.80,303.22 L638.77,302.08 L639.73,300.93 L640.68,299.77 L641.63,298.60 L642.56,297.42 L643.50,296.23 L644.43,295.03 L645.35,293.83 L646.27,292.62 L647.18,291.40 L648.09,290.19 L649.00,288.96 L649.91,287.73 L650.82,286.50 L651.72,285.27 L652.62,284.03 L653.53,282.80 L654.43,281.56 L655.34,280.32 L656.24,279.09 L657.15,277.85 L658.06,276.62 L658.97,275.39 L659.89,274.16 L660.81,272.94 L661.74,271.72 L662.67,270.50 L663.61,269.30 L664.55,268.09 L665.50,266.90 L666.45,265.71 L667.41,264.52 L668.37,263.34 L669.34,262.17 L670.32,261.00 L671.30,259.84 L672.28,258.68 L673.27,257.53 L674.26,256.38 L675.26,255.24 L676.27,254.11 L677.27,252.98 L678.29,251.85 L679.30,250.74 L680.32,249.62 L681.35,248.52 L682.38,247.41 L683.41,246.32 L684.45,245.23 L685.49,244.14 L686.53,243.06 L687.58,241.98 L688.63,240.91 L689.69,239.85 L690.74,238.79 L691.81,237.74 L692.87,236.69 L693.94,235.64 L695.01,234.60 L696.09,233.57 L697.16,232.54 L698.24,231.52 L699.33,230.50 L700.41,229.49 L701.50,228.48 L702.59,227.48 L703.69,226.48 L704.78,225.48 L705.88,224.50 L706.98,223.51 L708.09,222.53 L709.19,221.55 L710.30,220.58 L711.42,219.61 L712.53,218.64 L713.65,217.68 L714.76,216.72 L715.89,215.77 L717.01,214.81 L718.14,213.86 L719.26,212.92 L720.39,211.98 L721.53,211.03 L722.66,210.10 L723.80,209.16 L724.94,208.23 L726.08,207.30 L727.22,206.37 L728.37,205.44 L729.51,204.52 L730.66,203.59 L731.81,202.67 L732.97,201.75 L734.12,200.83 L735.28,199.92 L736.44,199.00 L737.60,198.09 L738.76,197.17 L739.92,196.26 L741.09,195.35 L742.25,194.43 L743.42,193.52 L744.59,192.61 L745.77,191.70 L746.94,190.79 L748.11,189.88 L749.29,188.97 L750.47,188.06 L751.65,187.14 L752.83,186.23 L754.01,185.32 L755.20,184.41 L756.38,183.49 L757.57,182.58 L758.76,181.66 L759.94,180.74 L761.13,179.82 L762.33,178.90 L763.52,177.98 L764.71,177.06 L765.91,176.13 L767.10,175.20 L768.30,174.27 L769.50,173.34 L770.70,172.41 L771.90,171.47 L773.10,170.53 L774.30,169.59 L775.50,168.65 L776.70,167.70 L777.91,166.75 L779.11,165.79 L780.32,164.84 L781.53,163.88 L782.73,162.91 L783.94,161.95 L785.15,160.98 L786.36,160.01 L787.57,159.04 L788.78,158.07 L790.00,157.10 L791.21,156.13 L792.43,155.16 L793.65,154.19 L794.87,153.23 L796.09,152.26 L797.31,151.30 L798.54,150.35 L799.76,149.40 L800.99,148.45 L802.22,147.51 L803.46,146.57 L804.69,145.64 L805.93,144.72 L807.17,143.80 L808.41,142.89 L809.66,141.99 L810.90,141.10 L812.16,140.22 L813.41,139.35 L814.67,138.49 L815.92,137.64 L817.19,136.80 L818.45,135.97 L819.72,135.16 L820.99,134.35 L822.27,133.57 L823.55,132.79 L824.83,132.03 L826.12,131.29 L827.41,130.56 L828.70,129.85 L830.00,129.15 L831.30,128.47 L832.61,127.81 L833.92,127.17 L835.23,126.54 L836.55,125.94 L837.88,125.35 L839.20,124.78 L840.54,124.24 L841.87,123.72 L843.21,123.21 L844.56,122.74 L845.91,122.28 L847.27,121.85 L848.63,121.44 L850.00,121.05 L851.37,120.69 L852.74,120.36 L854.13,120.05 L855.52,119.77 L856.91,119.51 L858.31,119.28 L859.71,119.08 L861.12,118.91 L862.54,118.77 L863.96,118.66 L865.39,118.58 L866.83,118.52 L868.27,118.50 L869.72,118.51 L871.17,118.56 L872.63,118.63 L874.09,118.73 L875.56,118.87 L877.04,119.02 L878.52,119.21 L880.00,119.42 L881.48,119.65 L882.97,119.91 L884.46,120.19 L885.95,120.48 L887.44,120.80 L888.93,121.14 L890.43,121.49 L891.92,121.86 L893.41,122.24 L894.90,122.63 L896.39,123.04 L897.88,123.46 L899.36,123.89 L900.84,124.33 L902.32,124.77 L903.79,125.22 L905.26,125.68 L906.73,126.14 L908.18,126.61 L909.64,127.08 L911.09,127.55 L912.53,128.02 L913.98,128.50 L915.41,128.98 L916.85,129.47 L918.28,129.95 L919.71,130.44 L921.13,130.93 L922.55,131.42 L923.97,131.92 L925.39,132.41 L926.80,132.91 L928.22,133.41 L929.63,133.91 L931.04,134.42 L932.45,134.92 L933.86,135.42 L935.27,135.93 L936.67,136.43 L938.08,136.94 L939.49,137.44 L940.89,137.95 L942.30,138.45 L943.71,138.96 L945.12,139.46 L946.53,139.96 L947.94,140.47 L949.35,140.97 L950.77,141.47 L952.19,141.97 L953.61,142.47 L955.03,142.97 L956.44,143.47 L957.86,143.97 L959.28,144.48 L960.69,144.99 L962.10,145.51 L963.50,146.03 L964.89,146.57 L966.28,147.11 L967.66,147.66 L969.03,148.22 L970.39,148.80 L971.74,149.39 L973.08,150.00 L974.40,150.62 L975.71,151.26 L977.00,151.92 L978.28,152.60 L979.53,153.29 L980.77,154.01 L981.99,154.76 L983.19,155.52 L984.37,156.32 L985.52,157.14 L986.66,157.98 L987.76,158.86 L988.84,159.76 L989.90,160.70 L990.92,161.66 L991.93,162.66 L992.90,163.68 L993.86,164.73 L994.78,165.81 L995.69,166.92 L996.57,168.05 L997.43,169.20 L998.27,170.38 L999.09,171.58 L999.88,172.80 L1000.66,174.04 L1001.42,175.30 L1002.16,176.58 L1002.88,177.88 L1003.59,179.19 L1004.28,180.52 L1004.95,181.87 L1005.61,183.23 L1006.26,184.60 L1006.88,185.99 L1007.50,187.38 L1008.11,188.79 L1008.70,190.21 L1009.28,191.64 L1009.85,193.07 L1010.41,194.51 L1010.95,195.96 L1011.50,197.42 L1012.03,198.87 L1012.55,200.34 L1013.07,201.80 L1013.58,203.27 L1014.09,204.73 L1014.59,206.20 L1015.08,207.67 L1015.57,209.14 L1016.05,210.60 L1016.53,212.07 L1017.01,213.54 L1017.48,215.01 L1017.94,216.48 L1018.41,217.95 L1018.86,219.42 L1019.32,220.89 L1019.77,222.36 L1020.22,223.83 L1020.66,225.29 L1021.11,226.76 L1021.55,228.23 L1021.98,229.70 L1022.42,231.16 L1022.85,232.63 L1023.28,234.10 L1023.71,235.56 L1024.14,237.02 L1024.57,238.49 L1024.99,239.95 L1025.42,241.41 L1025.84,242.87 L1026.27,244.33 L1026.69,245.79 L1027.11,247.25 L1027.54,248.70 L1027.96,250.16 L1028.38,251.61 L1028.81,253.06 L1029.23,254.51 L1029.66,255.96 L1030.09,257.41 L1030.51,258.85 L1030.94,260.30 L1031.38,261.74 L1031.81,263.18 L1032.25,264.61 L1032.69,266.05 L1033.13,267.48 L1033.57,268.92 L1034.02,270.35 L1034.47,271.77 L1034.92,273.20 L1035.38,274.62 L1035.84,276.04 L1036.30,277.46 L1036.77,278.87 L1037.24,280.29 L1037.72,281.70 L1038.20,283.10 L1038.69,284.51 L1039.18,285.91 L1039.68,287.31 L1040.18,288.70 L1040.69,290.10 L1041.20,291.49 L1041.72,292.87 L1042.25,294.25 L1042.78,295.63 L1043.32,297.01 L1043.86,298.38 L1044.42,299.75 L1044.98,301.12 L1045.54,302.48 L1046.12,303.84 L1046.70,305.20 L1047.29,306.55 L1047.89,307.90 L1048.49,309.24 L1049.11,310.58 L1049.73,311.92 L1050.37,313.25 L1051.01,314.58 L1051.66,315.90 L1052.32,317.22 L1052.99,318.53 L1053.67,319.84 L1054.36,321.15 L1055.06,322.45 L1055.76,323.75 L1056.48,325.04 L1057.21,326.33 L1057.94,327.62 L1058.68,328.90 L1059.43,330.18 L1060.19,331.46 L1060.96,332.73 L1061.74,334.00 L1062.52,335.26 L1063.31,336.52 L1064.10,337.78 L1064.91,339.03 L1065.72,340.29 L1066.54,341.53 L1067.36,342.78 L1068.19,344.02 L1069.03,345.26 L1069.87,346.50 L1070.71,347.73 L1071.57,348.97 L1072.43,350.19 L1073.29,351.42 L1074.16,352.65 L1075.03,353.87 L1075.91,355.09 L1076.80,356.31 L1077.68,357.52 L1078.57,358.73 L1079.47,359.95 L1080.37,361.16 L1081.27,362.36 L1082.18,363.57 L1083.09,364.77 L1084.00,365.98 L1084.92,367.18 L1085.83,368.38 L1086.75,369.58 L1087.68,370.78 L1088.60,371.97 L1089.53,373.17 L1090.46,374.36 L1091.39,375.55 L1092.32,376.75 L1093.25,377.94 L1094.19,379.13 L1095.12,380.32 L1096.06,381.51 L1097.00,382.70 L1097.93,383.89 L1098.87,385.07 L1099.81,386.26 L1100.75,387.45 L1101.68,388.64 L1102.62,389.82 L1103.55,391.01 L1104.49,392.20 L1105.42,393.39 L1106.35,394.58 L1107.28,395.76 L1108.21,396.95 L1109.14,398.14 L1110.07,399.33 L1110.99,400.52 L1111.91,401.71 L1112.83,402.90 L1113.74,404.10 L1114.66,405.29 L1115.57,406.48 L1116.47,407.68 L1117.38,408.88 L1118.28,410.07 L1119.17,411.27 L1120.06,412.47 L1120.95,413.67 L1121.84,414.88 L1122.72,416.08 L1123.60,417.28 L1124.48,418.49 L1125.35,419.69 L1126.22,420.90 L1127.09,422.11 L1127.96,423.31 L1128.83,424.52 L1129.69,425.73 L1130.56,426.93 L1131.42,428.14 L1132.29,429.34 L1133.15,430.55 L1134.01,431.76 L1134.87,432.96 L1135.74,434.16 L1136.60,435.37 L1137.46,436.57 L1138.33,437.77 L1139.19,438.97 L1140.06,440.17 L1140.93,441.37 L1141.80,442.56 L1142.68,443.76 L1143.55,444.95 L1144.43,446.14 L1145.31,447.33 L1146.19,448.52 L1147.08,449.70 L1147.97,450.88 L1148.86,452.06 L1149.76,453.24 L1150.66,454.41 L1151.57,455.59 L1152.48,456.75 L1153.40,457.92 L1154.32,459.08 L1155.24,460.24 L1156.17,461.40 L1157.11,462.55 L1158.05,463.70 L1159.00,464.85 L1159.96,465.99 L1160.92,467.13 L1161.88,468.27 L1162.86,469.40 L1163.84,470.52 L1164.83,471.65 L1165.83,472.77 L1166.84,473.88 L1167.85,474.99 L1168.87,476.09 L1169.90,477.19 L1170.94,478.29 L1171.99,479.38 L1173.05,480.46 L1174.11,481.54 L1175.19,482.61 L1176.27,483.68 L1177.37,484.74 L1178.48,485.80 L1179.60,486.85 L1180.72,487.90 L1181.86,488.94 L1183.01,489.97 L1184.18,491.00 L1185.35,492.02 L1186.53,493.03 L1187.73,494.04 L1188.94,495.04 L1190.16,496.04 L1191.40,497.02 L1192.65,498.00 L1193.90,498.96 L1195.17,499.92 L1196.45,500.86 L1197.73,501.78 L1199.03,502.69 L1200.33,503.57 L1201.64,504.44 L1202.95,505.29 L1204.28,506.11 L1205.60,506.91 L1206.93,507.68 L1208.27,508.42 L1209.61,509.13 L1210.95,509.82 L1212.29,510.46 L1213.63,511.08 L1214.98,511.66 L1216.32,512.20 L1217.66,512.71 L1219.01,513.17 L1220.35,513.59 L1221.68,513.97 L1223.02,514.30 L1224.35,514.59 L1225.67,514.82 L1226.99,515.01 L1228.31,515.15 L1229.62,515.23 L1230.92,515.26 L1232.21,515.24 L1233.50,515.15 L1234.77,515.01 L1236.04,514.81 L1237.29,514.54 L1238.54,514.21 L1239.77,513.82 L1240.99,513.36 L1242.20,512.83 L1243.39,512.23 L1244.57,511.56 L1245.74,510.82 L1246.89,510.00 L1248.02,509.11 L1249.13,508.14 L1250.23,507.09 L1251.31,505.96 L1252.38,504.74 L1253.42,503.45 L1254.44,502.07 L1255.44,500.60 L1256.42,499.04 L1257.38,497.39 L1258.32,495.65 L1259.23,493.82 L1260.12,491.90" stroke="#50e850" stroke-width="1.4" stroke-dasharray="2.2 2.6"/>
<path d="M128.18,31.93 L128.65,33.23 L129.11,34.54 L129.56,35.86 L130.01,37.20 L130.45,38.54 L130.88,39.90 L131.31,41.28 L131.74,42.66 L132.16,44.05 L132.58,45.46 L132.99,46.87 L133.41,48.29 L133.81,49.72 L134.22,51.16 L134.63,52.60 L135.03,54.05 L135.44,55.51 L135.84,56.97 L136.25,58.44 L136.65,59.92 L137.06,61.39 L137.47,62.88 L137.88,64.36 L138.29,65.85 L138.71,67.34 L139.13,68.83 L139.55,70.33 L139.98,71.82 L140.42,73.32 L140.86,74.81 L141.30,76.30 L141.75,77.80 L142.21,79.29 L142.68,80.78 L143.15,82.27 L143.63,83.75 L144.12,85.23 L144.62,86.70 L145.13,88.18 L145.65,89.64 L146.18,91.10 L146.72,92.56 L147.27,94.00 L147.83,95.45 L148.41,96.88 L149.00,98.30 L149.60,99.72 L150.22,101.13 L150.85,102.52 L151.49,103.91 L152.15,105.29 L152.82,106.66 L153.51,108.01 L154.22,109.35 L154.95,110.68 L155.69,112.00 L156.45,113.30 L157.22,114.59 L158.02,115.86 L158.84,117.12 L159.67,118.37 L160.53,119.59 L161.40,120.81 L162.30,122.00 L163.22,123.18 L164.16,124.33 L165.12,125.47 L166.10,126.59 L167.11,127.70 L168.14,128.78 L169.18,129.84 L170.25,130.88 L171.33,131.90 L172.43,132.89 L173.56,133.87 L174.69,134.82 L175.85,135.75 L177.02,136.65 L178.21,137.53 L179.41,138.39 L180.63,139.22 L181.86,140.03 L183.11,140.81 L184.37,141.56 L185.64,142.29 L186.92,142.98 L188.22,143.66 L189.53,144.30 L190.85,144.91 L192.17,145.50 L193.51,146.05 L194.86,146.58 L196.21,147.07 L197.57,147.53 L198.94,147.96 L200.32,148.36 L201.71,148.73 L203.10,149.06 L204.49,149.36 L205.89,149.63 L207.29,149.86 L208.70,150.06 L210.11,150.22 L211.53,150.34 L212.94,150.43 L214.36,150.49 L215.78,150.50 L217.20,150.48 L218.62,150.42 L220.04,150.32 L221.45,150.19 L222.87,150.01 L224.28,149.79 L225.70,149.54 L227.11,149.25 L228.52,148.92 L229.92,148.56 L231.33,148.16 L232.73,147.73 L234.12,147.27 L235.52,146.78 L236.91,146.26 L238.30,145.70 L239.69,145.12 L241.07,144.51 L242.45,143.88 L243.82,143.22 L245.19,142.53 L246.55,141.82 L247.92,141.09 L249.27,140.33 L250.62,139.55 L251.97,138.76 L253.31,137.94 L254.65,137.11 L255.98,136.25 L257.31,135.39 L258.63,134.50 L259.94,133.60 L261.25,132.69 L262.55,131.77 L263.85,130.83 L265.14,129.88 L266.42,128.92 L267.70,127.96 L268.96,126.98 L270.23,126.00 L271.48,125.01 L272.73,124.01 L273.97,123.02 L275.21,122.01 L276.44,121.01 L277.66,120.00 L278.89,118.99 L280.10,117.97 L281.32,116.96 L282.52,115.95 L283.73,114.94 L284.93,113.93 L286.14,112.92 L287.33,111.92 L288.53,110.92 L289.73,109.93 L290.92,108.94 L292.12,107.96 L293.32,106.99 L294.51,106.02 L295.71,105.07 L296.91,104.12 L298.11,103.18 L299.31,102.26 L300.51,101.34 L301.72,100.44 L302.93,99.55 L304.14,98.68 L305.36,97.82 L306.58,96.98 L307.81,96.15 L309.04,95.34 L310.28,94.55 L311.52,93.78 L312.77,93.02 L314.03,92.29 L315.29,91.58 L316.56,90.89 L317.84,90.22 L319.12,89.57 L320.42,88.95 L321.72,88.36 L323.03,87.78 L324.35,87.24 L325.68,86.72 L327.01,86.22 L328.35,85.75 L329.70,85.31 L331.05,84.90 L332.42,84.51 L333.78,84.15 L335.16,83.83 L336.54,83.53 L337.93,83.26 L339.32,83.02 L340.72,82.82 L342.12,82.64 L343.53,82.50 L344.95,82.39 L346.37,82.31 L347.79,82.26 L349.22,82.24 L350.66,82.25 L352.10,82.29 L353.54,82.36 L354.98,82.45 L356.44,82.57 L357.89,82.70 L359.35,82.87 L360.81,83.05 L362.27,83.25 L363.74,83.47 L365.21,83.71 L366.68,83.97 L368.15,84.24 L369.63,84.53 L371.11,84.83 L372.59,85.15 L374.07,85.48 L375.55,85.81 L377.03,86.16 L378.52,86.51 L380.00,86.88 L381.49,87.25 L382.97,87.62 L384.46,88.00 L385.95,88.38 L387.43,88.76 L388.92,89.15 L390.40,89.53 L391.88,89.92 L393.37,90.30 L394.85,90.68 L396.33,91.06 L397.81,91.44 L399.29,91.82 L400.76,92.20 L402.24,92.58 L403.71,92.96 L405.18,93.34 L406.65,93.72 L408.12,94.10 L409.58,94.49 L411.05,94.88 L412.51,95.27 L413.97,95.66 L415.42,96.06 L416.88,96.46 L418.33,96.86 L419.78,97.27 L421.22,97.68 L422.67,98.10 L424.11,98.52 L425.55,98.95 L426.98,99.38 L428.41,99.82 L429.84,100.27 L431.26,100.72 L432.68,101.18 L434.10,101.65 L435.51,102.12 L436.92,102.60 L438.33,103.09 L439.73,103.59 L441.13,104.10 L442.52,104.62 L443.91,105.14 L445.30,105.68 L446.68,106.22 L448.05,106.78 L449.43,107.35 L450.79,107.93 L452.15,108.51 L453.51,109.12 L454.86,109.73 L456.21,110.35 L457.55,110.99 L458.89,111.64 L460.22,112.30 L461.55,112.97 L462.88,113.65 L464.20,114.34 L465.51,115.04 L466.82,115.75 L468.13,116.47 L469.44,117.19 L470.74,117.93 L472.03,118.67 L473.33,119.42 L474.62,120.17 L475.91,120.94 L477.20,121.70 L478.48,122.48 L479.76,123.25 L481.04,124.04 L482.32,124.83 L483.59,125.62 L484.86,126.41 L486.13,127.21 L487.40,128.01 L488.67,128.81 L489.94,129.62 L491.21,130.42 L492.47,131.23 L493.73,132.04 L495.00,132.85 L496.26,133.66 L497.52,134.47 L498.79,135.27 L500.05,136.08 L501.31,136.88 L502.57,137.69 L503.84,138.49 L505.10,139.28 L506.37,140.08 L507.63,140.87 L508.90,141.65 L510.16,142.44 L511.43,143.21 L512.70,143.99 L513.97,144.76 L515.25,145.52 L516.52,146.28 L517.79,147.04 L519.07,147.80 L520.35,148.55 L521.63,149.30 L522.91,150.05 L524.19,150.79 L525.47,151.54 L526.75,152.28 L528.04,153.02 L529.32,153.76 L530.61,154.50 L531.90,155.24 L533.19,155.99 L534.48,156.73 L535.77,157.47 L537.06,158.21 L538.35,158.95 L539.65,159.70 L540.94,160.45 L542.24,161.20 L543.54,161.95 L544.84,162.70 L546.14,163.46 L547.44,164.22 L548.75,164.98 L550.05,165.75 L551.36,166.52 L552.66,167.29 L553.97,168.07 L555.28,168.86 L556.59,169.64 L557.90,170.43 L559.21,171.22 L560.53,172.01 L561.85,172.80 L563.16,173.59 L564.48,174.38 L565.81,175.17 L567.13,175.96 L568.45,176.74 L569.78,177.52 L571.11,178.30 L572.44,179.07 L573.78,179.84 L575.11,180.60 L576.45,181.36 L577.80,182.10 L579.14,182.84 L580.49,183.57 L581.84,184.30 L583.19,185.01 L584.54,185.71 L585.90,186.40 L587.26,187.08 L588.63,187.75 L590.00,188.40 L591.37,189.04 L592.74,189.67 L594.12,190.28 L595.50,190.88 L596.88,191.46 L598.27,192.03 L599.67,192.57 L601.06,193.10 L602.46,193.61 L603.86,194.10 L605.27,194.58 L606.68,195.03 L608.10,195.47 L609.51,195.88 L610.93,196.28 L612.36,196.65 L613.78,197.01 L615.21,197.34 L616.64,197.66 L618.08,197.96 L619.51,198.23 L620.95,198.49 L622.39,198.72 L623.83,198.94 L625.27,199.13 L626.71,199.30 L628.16,199.45 L629.60,199.58 L631.05,199.69 L632.49,199.78 L633.94,199.85 L635.39,199.89 L636.83,199.91 L638.28,199.91 L639.73,199.89 L641.18,199.85 L642.62,199.78 L644.07,199.69 L645.51,199.58 L646.96,199.45 L648.40,199.29 L649.84,199.11 L651.28,198.91 L652.72,198.68 L654.16,198.43 L655.59,198.16 L657.03,197.86 L658.46,197.54 L659.89,197.20 L661.31,196.83 L662.73,196.44 L664.16,196.02 L665.57,195.58 L666.99,195.12 L668.40,194.63 L669.81,194.12 L671.21,193.59 L672.62,193.04 L674.02,192.48 L675.42,191.90 L676.81,191.30 L678.21,190.69 L679.60,190.07 L680.99,189.43 L682.39,188.79 L683.77,188.13 L685.16,187.47 L686.55,186.80 L687.94,186.13 L689.32,185.45 L690.71,184.77 L692.09,184.09 L693.48,183.41 L694.86,182.73 L696.25,182.05 L697.64,181.38 L699.02,180.71 L700.41,180.04 L701.80,179.39 L703.18,178.74 L704.57,178.10 L705.96,177.48 L707.36,176.86 L708.75,176.26 L710.14,175.68 L711.54,175.11 L712.94,174.55 L714.34,174.02 L715.75,173.51 L717.15,173.02 L718.56,172.55 L719.97,172.10 L721.39,171.68 L722.80,171.28 L724.22,170.91 L725.65,170.58 L727.07,170.27 L728.50,169.99 L729.94,169.74 L731.38,169.53 L732.82,169.35 L734.27,169.21 L735.72,169.09 L737.17,169.01 L738.63,168.96 L740.09,168.94 L741.55,168.95 L743.01,168.99 L744.48,169.05 L745.95,169.14 L747.42,169.26 L748.89,169.41 L750.37,169.57 L751.84,169.76 L753.32,169.98 L754.80,170.22 L756.28,170.47 L757.76,170.75 L759.24,171.05 L760.72,171.37 L762.20,171.70 L763.68,172.06 L765.16,172.43 L766.64,172.81 L768.12,173.22 L769.60,173.63 L771.07,174.06 L772.55,174.50 L774.02,174.96 L775.49,175.42 L776.96,175.90 L778.43,176.39 L779.90,176.88 L781.36,177.38 L782.82,177.89 L784.28,178.41 L785.74,178.93 L787.19,179.46 L788.63,179.99 L790.08,180.53 L791.52,181.07 L792.96,181.61 L794.39,182.15 L795.82,182.69 L797.24,183.23 L798.66,183.77 L800.07,184.31 L801.48,184.85 L802.89,185.39 L804.29,185.92 L805.68,186.46 L807.07,186.99 L808.46,187.53 L809.85,188.06 L811.23,188.59 L812.61,189.12 L813.98,189.65 L815.35,190.18 L816.72,190.71 L818.09,191.25 L819.45,191.78 L820.82,192.31 L822.18,192.84 L823.53,193.37 L824.89,193.91 L826.25,194.44 L827.60,194.98 L828.95,195.51 L830.30,196.05 L831.65,196.59 L833.00,197.13 L834.35,197.67 L835.70,198.22 L837.05,198.76 L838.40,199.31 L839.75,199.86 L841.10,200.41 L842.44,200.96 L843.80,201.52 L845.15,202.08 L846.50,202.64 L847.85,203.20 L849.21,203.77 L850.56,204.34 L851.92,204.91 L853.28,205.49 L854.64,206.07 L856.01,206.65 L857.37,207.23 L858.74,207.82 L860.11,208.42 L861.49,209.02 L862.86,209.62 L864.24,210.22 L865.62,210.83 L867.00,211.45 L868.39,212.06 L869.77,212.69 L871.16,213.31 L872.55,213.94 L873.93,214.58 L875.32,215.22 L876.71,215.87 L878.10,216.52 L879.49,217.17 L880.87,217.83 L882.26,218.50 L883.64,219.17 L885.03,219.85 L886.41,220.53 L887.79,221.21 L889.17,221.91 L890.55,222.60 L891.92,223.31 L893.30,224.02 L894.67,224.73 L896.03,225.45 L897.40,226.18 L898.76,226.91 L900.11,227.65 L901.47,228.40 L902.81,229.15 L904.16,229.91 L905.50,230.67 L906.83,231.44 L908.16,232.22 L909.49,233.00 L910.80,233.79 L912.12,234.59 L913.43,235.40 L914.73,236.21 L916.02,237.03 L917.31,237.85 L918.59,238.69 L919.87,239.53 L921.13,240.38 L922.39,241.23 L923.65,242.10 L924.89,242.97 L926.13,243.85 L927.35,244.73 L928.57,245.63 L929.78,246.53 L930.98,247.44 L932.18,248.36 L933.36,249.29 L934.53,250.23 L935.69,251.17 L936.85,252.12 L937.99,253.08 L939.12,254.05 L940.24,255.03 L941.35,256.02 L942.45,257.02 L943.54,258.02 L944.61,259.04 L945.67,260.06 L946.73,261.09 L947.76,262.13 L948.79,263.18 L949.80,264.25 L950.81,265.32 L951.79,266.39 L952.77,267.48 L953.74,268.58 L954.69,269.68 L955.63,270.80 L956.56,271.92 L957.48,273.05 L958.39,274.19 L959.29,275.34 L960.18,276.49 L961.05,277.65 L961.92,278.83 L962.77,280.00 L963.62,281.19 L964.46,282.38 L965.28,283.58 L966.10,284.79 L966.91,286.00 L967.71,287.23 L968.49,288.45 L969.28,289.69 L970.05,290.93 L970.81,292.18 L971.57,293.43 L972.31,294.69 L973.05,295.96 L973.78,297.23 L974.51,298.51 L975.22,299.79 L975.93,301.08 L976.63,302.38 L977.33,303.68 L978.01,304.98 L978.69,306.29 L979.37,307.61 L980.04,308.93 L980.70,310.25 L981.36,311.58 L982.01,312.92 L982.65,314.26 L983.29,315.60 L983.92,316.95 L984.55,318.30 L985.17,319.65 L985.79,321.01 L986.41,322.37 L987.02,323.74 L987.62,325.11 L988.22,326.48 L988.82,327.86 L989.41,329.23 L990.00,330.62 L990.59,332.00 L991.17,333.39 L991.75,334.78 L992.33,336.17 L992.90,337.56 L993.47,338.96 L994.04,340.36 L994.61,341.76 L995.17,343.16 L995.73,344.57 L996.29,345.97 L996.85,347.38 L997.41,348.79 L997.97,350.20 L998.52,351.61 L999.07,353.03 L999.63,354.44 L1000.18,355.85 L1000.73,357.27 L1001.28,358.68 L1001.84,360.10 L1002.39,361.52 L1002.94,362.93 L1003.49,364.35 L1004.04,365.76 L1004.60,367.18 L1005.15,368.60 L1005.71,370.01 L1006.26,371.43 L1006.82,372.84 L1007.38,374.25 L1007.94,375.67 L1008.50,377.08 L1009.07,378.49 L1009.63,379.90 L1010.20,381.30 L1010.78,382.71 L1011.35,384.12 L1011.93,385.52 L1012.51,386.92 L1013.09,388.32 L1013.68,389.72 L1014.27,391.11 L1014.86,392.50 L1015.46,393.89 L1016.06,395.28 L1016.67,396.66 L1017.28,398.05 L1017.90,399.43 L1018.52,400.80 L1019.14,402.17 L1019.77,403.54 L1020.41,404.91 L1021.05,406.27 L1021.69,407.63 L1022.34,408.99 L1023.00,410.34 L1023.67,411.68 L1024.34,413.03 L1025.01,414.37 L1025.70,415.70 L1026.38,417.03 L1027.08,418.35 L1027.78,419.68 L1028.50,420.99 L1029.21,422.30 L1029.94,423.61 L1030.67,424.91 L1031.41,426.20 L1032.16,427.49 L1032.92,428.78 L1033.69,430.05 L1034.46,431.33 L1035.24,432.59 L1036.04,433.85 L1036.84,435.11 L1037.65,436.36 L1038.47,437.60 L1039.29,438.84 L1040.13,440.07 L1040.97,441.29 L1041.83,442.51 L1042.68,443.73 L1043.55,444.93 L1044.42,446.14 L1045.30,447.34 L1046.19,448.54 L1047.08,449.73 L1047.98,450.92 L1048.89,452.10 L1049.80,453.28 L1050.71,454.46 L1051.63,455.63 L1052.56,456.80 L1053.49,457.97 L1054.42,459.13 L1055.36,460.29 L1056.30,461.45 L1057.24,462.61 L1058.19,463.76 L1059.14,464.92 L1060.09,466.07 L1061.04,467.22 L1062.00,468.37 L1062.95,469.52 L1063.91,470.66 L1064.87,471.81 L1065.83,472.95 L1066.79,474.10 L1067.76,475.24 L1068.72,476.39 L1069.68,477.53 L1070.64,478.68 L1071.60,479.82 L1072.56,480.97 L1073.52,482.12 L1074.47,483.27 L1075.43,484.42 L1076.38,485.57 L1077.33,486.72 L1078.28,487.88 L1079.22,489.03 L1080.16,490.19 L1081.10,491.35 L1082.04,492.51 L1082.97,493.68 L1083.89,494.85 L1084.81,496.02 L1085.73,497.20 L1086.64,498.38 L1087.55,499.56 L1088.45,500.75 L1089.35,501.94 L1090.23,503.13 L1091.12,504.33 L1091.99,505.53 L1092.86,506.74 L1093.72,507.95 L1094.58,509.17 L1095.43,510.39 L1096.26,511.62 L1097.10,512.86 L1097.92,514.10 L1098.73,515.34 L1099.54,516.59 L1100.33,517.85 L1101.12,519.12 L1101.89,520.39 L1102.66,521.67 L1103.42,522.95 L1104.17,524.24 L1104.92,525.53 L1105.65,526.83 L1106.38,528.13 L1107.11,529.44 L1107.82,530.75 L1108.53,532.07 L1109.24,533.39 L1109.94,534.72 L1110.63,536.04 L1111.32,537.38 L1112.00,538.71 L1112.68,540.05 L1113.35,541.39 L1114.02,542.74 L1114.69,544.09 L1115.36,545.44 L1116.02,546.79 L1116.68,548.14 L1117.33,549.50 L1117.99,550.85 L1118.64,552.21 L1119.29,553.57 L1119.94,554.93 L1120.59,556.29 L1121.24,557.66 L1121.89,559.02 L1122.54,560.38 L1123.19,561.74 L1123.84,563.11 L1124.49,564.47 L1125.14,565.83 L1125.79,567.19 L1126.45,568.55 L1127.11,569.91 L1127.77,571.27 L1128.43,572.62 L1129.10,573.98 L1129.77,575.33 L1130.44,576.68 L1131.12,578.03 L1131.80,579.37 L1132.48,580.71 L1133.17,582.05 L1133.87,583.39 L1134.57,584.72 L1135.28,586.05 L1135.99,587.38 L1136.71,588.70 L1137.44,590.01 L1138.17,591.33 L1138.92,592.64 L1139.66,593.94 L1140.42,595.24 L1141.19,596.53 L1141.96,597.82 L1142.74,599.11 L1143.53,600.38 L1144.33,601.66 L1145.13,602.93 L1145.94,604.19 L1146.76,605.45 L1147.59,606.70 L1148.43,607.95 L1149.27,609.19 L1150.12,610.43 L1150.98,611.66 L1151.85,612.88 L1152.72,614.10 L1153.60,615.32 L1154.49,616.53 L1155.39,617.73 L1156.30,618.93 L1157.21,620.13 L1158.13,621.31 L1159.05,622.50 L1159.99,623.67 L1160.93,624.84 L1161.88,626.01 L1162.83,627.17 L1163.79,628.32 L1164.76,629.47 L1165.74,630.62 L1166.72,631.75 L1167.72,632.88 L1168.71,634.01 L1169.72,635.13 L1170.73,636.24 L1171.75,637.35 L1172.77,638.45 L1173.81,639.55 L1174.84,640.64 L1175.89,641.73 L1176.94,642.81 L1178.00,643.88 L1179.07,644.94 L1180.14,646.01 L1181.22,647.06 L1182.30,648.11 L1183.40,649.15 L1184.49,650.19 L1185.60,651.22 L1186.71,652.24 L1187.83,653.26 L1188.95,654.27 L1190.08,655.28 L1191.22,656.27 L1192.36,657.27 L1193.51,658.25 L1194.66,659.23 L1195.82,660.21 L1196.99,661.17 L1198.16,662.14 L1199.34,663.09 L1200.52,664.04 L1201.71,664.98 L1202.91,665.91 L1204.11,666.84 L1205.32,667.76 L1206.53,668.68 L1207.75,669.59 L1208.98,670.49 L1210.21,671.39 L1211.44,672.28 L1212.69,673.16 L1213.93,674.03 L1215.19,674.89 L1216.45,675.74 L1217.71,676.57 L1218.98,677.38 L1220.26,678.17 L1221.54,678.94 L1222.83,679.68 L1224.12,680.40 L1225.42,681.08 L1226.73,681.74 L1228.04,682.35 L1229.36,682.94 L1230.69,683.48 L1232.02,683.98 L1233.36,684.44 L1234.71,684.85 L1236.06,685.21 L1237.42,685.52 L1238.78,685.78 L1240.16,685.98 L1241.53,686.13 L1242.92,686.22 L1244.31,686.24 L1245.71,686.20 L1247.12,686.09 L1248.54,685.92 L1249.96,685.67 L1251.39,685.35 L1252.82,684.95 L1254.27,684.48 L1255.72,683.92 L1257.18,683.28 L1258.64,682.56 L1260.12,681.75" stroke="#20f0ec" stroke-width="2.7"/>
<path d="M127.57,680.68 L128.39,682.33 L129.25,683.89 L130.15,685.37 L131.10,686.76 L132.09,688.07 L133.11,689.29 L134.18,690.44 L135.27,691.50 L136.40,692.49 L137.57,693.41 L138.76,694.25 L139.98,695.03 L141.23,695.73 L142.50,696.36 L143.79,696.93 L145.11,697.43 L146.44,697.87 L147.80,698.24 L149.17,698.56 L150.55,698.82 L151.94,699.02 L153.35,699.17 L154.76,699.27 L156.19,699.31 L157.61,699.30 L159.04,699.24 L160.48,699.14 L161.91,698.99 L163.34,698.80 L164.77,698.57 L166.19,698.30 L167.61,697.99 L169.02,697.64 L170.42,697.26 L171.80,696.84 L173.18,696.39 L174.54,695.91 L175.89,695.40 L177.23,694.85 L178.56,694.28 L179.87,693.68 L181.18,693.05 L182.47,692.39 L183.76,691.71 L185.03,691.00 L186.29,690.26 L187.54,689.50 L188.79,688.71 L190.02,687.91 L191.24,687.07 L192.45,686.22 L193.65,685.35 L194.84,684.46 L196.03,683.54 L197.20,682.61 L198.36,681.66 L199.52,680.69 L200.66,679.71 L201.80,678.71 L202.93,677.69 L204.05,676.66 L205.16,675.62 L206.26,674.56 L207.35,673.49 L208.44,672.41 L209.51,671.32 L210.58,670.22 L211.65,669.11 L212.70,667.99 L213.75,666.86 L214.79,665.73 L215.82,664.59 L216.84,663.44 L217.86,662.29 L218.87,661.14 L219.88,659.98 L220.88,658.81 L221.87,657.65 L222.85,656.48 L223.83,655.30 L224.80,654.12 L225.77,652.94 L226.73,651.76 L227.68,650.57 L228.63,649.37 L229.57,648.18 L230.51,646.98 L231.44,645.78 L232.36,644.57 L233.28,643.36 L234.19,642.15 L235.10,640.93 L236.00,639.71 L236.90,638.49 L237.79,637.27 L238.68,636.04 L239.56,634.81 L240.44,633.58 L241.31,632.34 L242.17,631.11 L243.04,629.86 L243.90,628.62 L244.75,627.38 L245.60,626.13 L246.44,624.88 L247.28,623.62 L248.12,622.37 L248.95,621.11 L249.78,619.85 L250.60,618.59 L251.42,617.32 L252.24,616.06 L253.05,614.79 L253.86,613.52 L254.67,612.25 L255.47,610.97 L256.27,609.70 L257.06,608.42 L257.86,607.14 L258.65,605.86 L259.43,604.58 L260.21,603.29 L261.00,602.01 L261.77,600.72 L262.55,599.43 L263.32,598.14 L264.09,596.85 L264.86,595.56 L265.62,594.27 L266.38,592.97 L267.14,591.68 L267.90,590.38 L268.66,589.09 L269.41,587.79 L270.17,586.49 L270.92,585.19 L271.67,583.89 L272.41,582.59 L273.16,581.29 L273.90,579.98 L274.65,578.68 L275.39,577.38 L276.13,576.07 L276.87,574.77 L277.61,573.47 L278.34,572.16 L279.08,570.86 L279.82,569.55 L280.55,568.25 L281.29,566.94 L282.02,565.63 L282.75,564.33 L283.49,563.02 L284.22,561.72 L284.95,560.42 L285.68,559.11 L286.41,557.81 L287.15,556.50 L287.88,555.20 L288.61,553.90 L289.34,552.59 L290.08,551.29 L290.81,549.99 L291.55,548.69 L292.28,547.39 L293.02,546.09 L293.75,544.79 L294.49,543.50 L295.23,542.20 L295.97,540.91 L296.71,539.61 L297.45,538.32 L298.19,537.03 L298.94,535.74 L299.68,534.45 L300.43,533.16 L301.18,531.87 L301.93,530.59 L302.68,529.30 L303.43,528.02 L304.19,526.74 L304.95,525.46 L305.71,524.18 L306.47,522.91 L307.23,521.63 L308.00,520.36 L308.77,519.09 L309.54,517.82 L310.32,516.55 L311.09,515.29 L311.87,514.03 L312.65,512.77 L313.44,511.51 L314.23,510.25 L315.02,509.00 L315.82,507.75 L316.61,506.50 L317.42,505.26 L318.22,504.01 L319.03,502.77 L319.84,501.53 L320.66,500.30 L321.48,499.06 L322.30,497.83 L323.13,496.61 L323.96,495.38 L324.79,494.16 L325.63,492.94 L326.48,491.73 L327.32,490.51 L328.18,489.30 L329.03,488.10 L329.89,486.90 L330.76,485.70 L331.63,484.50 L332.51,483.31 L333.39,482.12 L334.27,480.93 L335.17,479.75 L336.06,478.57 L336.96,477.40 L337.87,476.22 L338.78,475.06 L339.70,473.89 L340.62,472.73 L341.55,471.58 L342.48,470.43 L343.42,469.28 L344.37,468.13 L345.32,467.00 L346.28,465.86 L347.25,464.73 L348.22,463.60 L349.19,462.48 L350.18,461.36 L351.17,460.25 L352.16,459.14 L353.17,458.03 L354.18,456.93 L355.19,455.84 L356.22,454.75 L357.25,453.66 L358.28,452.58 L359.33,451.51 L360.38,450.43 L361.44,449.37 L362.51,448.31 L363.58,447.25 L364.66,446.20 L365.75,445.15 L366.85,444.11 L367.95,443.08 L369.06,442.05 L370.18,441.02 L371.30,440.00 L372.43,438.98 L373.56,437.96 L374.70,436.95 L375.84,435.94 L376.99,434.93 L378.14,433.92 L379.29,432.92 L380.45,431.92 L381.61,430.92 L382.77,429.93 L383.93,428.93 L385.10,427.94 L386.26,426.94 L387.43,425.95 L388.60,424.96 L389.76,423.96 L390.93,422.97 L392.10,421.98 L393.26,420.98 L394.43,419.99 L395.59,418.99 L396.75,418.00 L397.91,417.00 L399.07,416.00 L400.22,415.00 L401.37,413.99 L402.51,412.98 L403.66,411.97 L404.79,410.96 L405.93,409.94 L407.05,408.92 L408.17,407.90 L409.29,406.87 L410.40,405.84 L411.50,404.80 L412.60,403.76 L413.69,402.72 L414.77,401.67 L415.85,400.62 L416.92,399.56 L417.99,398.51 L419.06,397.45 L420.12,396.40 L421.18,395.34 L422.25,394.29 L423.31,393.24 L424.37,392.20 L425.43,391.16 L426.50,390.12 L427.56,389.09 L428.63,388.07 L429.71,387.06 L430.79,386.06 L431.87,385.06 L432.97,384.08 L434.06,383.10 L435.17,382.14 L436.28,381.19 L437.40,380.25 L438.53,379.32 L439.66,378.40 L440.80,377.49 L441.94,376.59 L443.10,375.69 L444.26,374.81 L445.42,373.94 L446.59,373.08 L447.77,372.23 L448.95,371.38 L450.15,370.55 L451.34,369.72 L452.55,368.91 L453.76,368.10 L454.97,367.30 L456.19,366.50 L457.42,365.72 L458.65,364.94 L459.89,364.17 L461.14,363.41 L462.39,362.66 L463.65,361.91 L464.91,361.17 L466.18,360.44 L467.46,359.72 L468.74,359.00 L470.02,358.28 L471.32,357.58 L472.61,356.88 L473.92,356.18 L475.23,355.50 L476.54,354.81 L477.86,354.14 L479.19,353.47 L480.52,352.80 L481.85,352.14 L483.19,351.49 L484.54,350.84 L485.89,350.19 L487.24,349.55 L488.60,348.91 L489.97,348.28 L491.34,347.65 L492.71,347.03 L494.09,346.41 L495.47,345.79 L496.85,345.18 L498.24,344.57 L499.63,343.96 L501.03,343.36 L502.42,342.76 L503.83,342.16 L505.23,341.56 L506.64,340.97 L508.05,340.38 L509.46,339.79 L510.87,339.21 L512.29,338.62 L513.71,338.04 L515.13,337.46 L516.55,336.88 L517.98,336.30 L519.40,335.72 L520.83,335.15 L522.26,334.57 L523.68,334.00 L525.12,333.43 L526.55,332.85 L527.98,332.28 L529.41,331.71 L530.84,331.13 L532.28,330.56 L533.71,329.99 L535.14,329.41 L536.57,328.84 L538.01,328.27 L539.44,327.69 L540.87,327.11 L542.30,326.53 L543.73,325.96 L545.16,325.37 L546.59,324.79 L548.01,324.21 L549.44,323.62 L550.86,323.03 L552.28,322.44 L553.70,321.85 L555.12,321.25 L556.54,320.65 L557.95,320.05 L559.36,319.45 L560.77,318.84 L562.18,318.23 L563.58,317.62 L564.98,317.00 L566.38,316.38 L567.77,315.75 L569.16,315.12 L570.55,314.49 L571.93,313.85 L573.31,313.21 L574.69,312.57 L576.06,311.91 L577.43,311.26 L578.79,310.60 L580.15,309.93 L581.50,309.26 L582.85,308.58 L584.20,307.90 L585.53,307.21 L586.87,306.51 L588.20,305.81 L589.52,305.11 L590.84,304.39 L592.15,303.67 L593.46,302.95 L594.76,302.21 L596.05,301.47 L597.34,300.72 L598.62,299.97 L599.89,299.21 L601.16,298.44 L602.42,297.66 L603.67,296.87 L604.92,296.08 L606.16,295.28 L607.39,294.47 L608.62,293.65 L609.83,292.82 L611.04,291.99 L612.24,291.14 L613.43,290.29 L614.62,289.43 L615.80,288.55 L616.96,287.67 L618.12,286.78 L619.27,285.88 L620.41,284.97 L621.54,284.05 L622.67,283.11 L623.78,282.17 L624.88,281.22 L625.98,280.26 L627.06,279.29 L628.14,278.30 L629.21,277.31 L630.27,276.31 L631.32,275.30 L632.36,274.28 L633.39,273.25 L634.42,272.21 L635.44,271.16 L636.45,270.10 L637.45,269.04 L638.44,267.96 L639.43,266.88 L640.41,265.79 L641.38,264.69 L642.35,263.59 L643.31,262.47 L644.26,261.35 L645.21,260.23 L646.15,259.09 L647.08,257.95 L648.01,256.80 L648.93,255.64 L649.84,254.48 L650.75,253.31 L651.66,252.14 L652.56,250.96 L653.45,249.77 L654.34,248.58 L655.22,247.38 L656.10,246.18 L656.98,244.97 L657.85,243.76 L658.71,242.54 L659.57,241.32 L660.43,240.09 L661.28,238.86 L662.13,237.62 L662.98,236.38 L663.82,235.13 L664.66,233.89 L665.50,232.63 L666.33,231.38 L667.16,230.12 L667.99,228.86 L668.82,227.59 L669.64,226.32 L670.46,225.05 L671.28,223.78 L672.09,222.50 L672.91,221.22 L673.72,219.94 L674.53,218.66 L675.34,217.38 L676.15,216.09 L676.96,214.80 L677.76,213.52 L678.57,212.23 L679.37,210.93 L680.18,209.64 L680.98,208.35 L681.78,207.06 L682.59,205.76 L683.39,204.47 L684.19,203.18 L685.00,201.88 L685.80,200.59 L686.61,199.30 L687.41,198.01 L688.22,196.71 L689.03,195.42 L689.83,194.13 L690.64,192.85 L691.46,191.56 L692.27,190.27 L693.08,188.99 L693.90,187.71 L694.72,186.43 L695.54,185.15 L696.37,183.87 L697.19,182.60 L698.02,181.33 L698.85,180.06 L699.69,178.80 L700.52,177.53 L701.36,176.28 L702.21,175.02 L703.06,173.77 L703.91,172.52 L704.76,171.27 L705.62,170.03 L706.48,168.79 L707.34,167.55 L708.21,166.32 L709.08,165.09 L709.95,163.87 L710.83,162.65 L711.71,161.43 L712.60,160.22 L713.49,159.01 L714.38,157.80 L715.27,156.60 L716.17,155.40 L717.08,154.20 L717.98,153.01 L718.90,151.82 L719.81,150.64 L720.73,149.46 L721.65,148.29 L722.58,147.12 L723.51,145.95 L724.45,144.79 L725.38,143.63 L726.33,142.48 L727.28,141.33 L728.23,140.18 L729.18,139.04 L730.14,137.91 L731.11,136.78 L732.08,135.65 L733.05,134.53 L734.03,133.41 L735.01,132.30 L736.00,131.19 L736.99,130.09 L737.98,128.99 L738.98,127.90 L739.99,126.81 L741.00,125.72 L742.01,124.65 L743.03,123.57 L744.06,122.50 L745.08,121.44 L746.12,120.38 L747.16,119.33 L748.20,118.28 L749.25,117.24 L750.30,116.20 L751.36,115.17 L752.42,114.15 L753.49,113.13 L754.56,112.11 L755.64,111.10 L756.73,110.10 L757.82,109.10 L758.91,108.11 L760.01,107.12 L761.12,106.14 L762.23,105.17 L763.34,104.20 L764.46,103.23 L765.59,102.28 L766.72,101.32 L767.86,100.38 L769.00,99.44 L770.15,98.51 L771.30,97.58 L772.46,96.65 L773.63,95.74 L774.80,94.83 L775.97,93.92 L777.15,93.02 L778.33,92.13 L779.52,91.24 L780.72,90.36 L781.92,89.48 L783.12,88.61 L784.33,87.75 L785.54,86.89 L786.76,86.03 L787.98,85.18 L789.21,84.34 L790.44,83.50 L791.68,82.67 L792.92,81.84 L794.17,81.02 L795.42,80.21 L796.67,79.39 L797.93,78.59 L799.20,77.79 L800.46,76.99 L801.74,76.20 L803.01,75.42 L804.29,74.64 L805.58,73.87 L806.87,73.10 L808.16,72.33 L809.46,71.58 L810.76,70.82 L812.06,70.07 L813.37,69.33 L814.68,68.59 L816.00,67.86 L817.32,67.13 L818.64,66.41 L819.97,65.69 L821.30,64.98 L822.64,64.27 L823.98,63.57 L825.32,62.87 L826.67,62.18 L828.01,61.49 L829.37,60.80 L830.72,60.12 L832.08,59.45 L833.45,58.78 L834.81,58.12 L836.18,57.46 L837.55,56.80 L838.93,56.15 L840.31,55.50 L841.69,54.86 L843.07,54.22 L844.46,53.59 L845.85,52.96 L847.25,52.34 L848.64,51.72 L850.04,51.11 L851.44,50.50 L852.85,49.89 L854.26,49.29 L855.67,48.70 L857.08,48.10 L858.50,47.52 L859.91,46.93 L861.33,46.35 L862.76,45.78 L864.18,45.21 L865.61,44.64 L867.04,44.08 L868.47,43.52 L869.91,42.97 L871.35,42.42 L872.79,41.87 L874.23,41.34 L875.67,40.80 L877.11,40.28 L878.56,39.76 L880.01,39.25 L881.46,38.75 L882.91,38.25 L884.36,37.77 L885.81,37.31 L887.27,36.85 L888.72,36.40 L890.18,35.97 L891.63,35.56 L893.09,35.16 L894.55,34.77 L896.00,34.41 L897.46,34.06 L898.91,33.73 L900.37,33.41 L901.83,33.12 L903.28,32.85 L904.73,32.60 L906.19,32.37 L907.64,32.16 L909.09,31.98 L910.54,31.82 L911.99,31.69 L913.44,31.58 L914.88,31.50 L916.33,31.45 L917.77,31.42 L919.21,31.43 L920.65,31.46 L922.09,31.53 L923.52,31.62 L924.95,31.75 L926.38,31.91 L927.81,32.10 L929.23,32.33 L930.65,32.59 L932.07,32.89 L933.48,33.23 L934.89,33.59 L936.29,34.00 L937.69,34.43 L939.08,34.90 L940.46,35.40 L941.84,35.94 L943.20,36.50 L944.56,37.10 L945.91,37.73 L947.24,38.39 L948.56,39.07 L949.87,39.79 L951.17,40.54 L952.45,41.31 L953.72,42.11 L954.97,42.94 L956.20,43.79 L957.42,44.68 L958.62,45.58 L959.80,46.51 L960.96,47.47 L962.10,48.45 L963.22,49.46 L964.32,50.48 L965.40,51.53 L966.45,52.60 L967.48,53.70 L968.49,54.81 L969.47,55.95 L970.42,57.10 L971.35,58.28 L972.26,59.47 L973.14,60.68 L974.00,61.91 L974.84,63.15 L975.65,64.41 L976.45,65.69 L977.22,66.98 L977.98,68.28 L978.72,69.59 L979.44,70.92 L980.15,72.26 L980.84,73.60 L981.52,74.96 L982.18,76.33 L982.83,77.70 L983.47,79.08 L984.10,80.47 L984.71,81.87 L985.32,83.27 L985.92,84.67 L986.51,86.08 L987.09,87.49 L987.67,88.90 L988.24,90.32 L988.81,91.73 L989.37,93.15 L989.92,94.57 L990.47,95.99 L991.02,97.41 L991.56,98.83 L992.09,100.26 L992.63,101.68 L993.16,103.10 L993.68,104.53 L994.20,105.96 L994.72,107.38 L995.24,108.81 L995.75,110.24 L996.26,111.66 L996.76,113.09 L997.27,114.52 L997.77,115.95 L998.27,117.38 L998.77,118.81 L999.27,120.23 L999.76,121.66 L1000.26,123.09 L1000.75,124.51 L1001.24,125.94 L1001.74,127.37 L1002.23,128.79 L1002.72,130.22 L1003.21,131.64 L1003.70,133.06 L1004.20,134.48 L1004.69,135.90 L1005.18,137.32 L1005.68,138.74 L1006.17,140.16 L1006.67,141.57 L1007.17,142.98 L1007.67,144.39 L1008.17,145.80 L1008.68,147.21 L1009.18,148.62 L1009.69,150.02 L1010.20,151.42 L1010.72,152.82 L1011.24,154.22 L1011.76,155.62 L1012.28,157.01 L1012.81,158.40 L1013.34,159.79 L1013.88,161.17 L1014.42,162.56 L1014.97,163.94 L1015.52,165.31 L1016.07,166.69 L1016.63,168.06 L1017.20,169.42 L1017.77,170.79 L1018.34,172.15 L1018.93,173.51 L1019.52,174.86 L1020.11,176.21 L1020.71,177.56 L1021.32,178.90 L1021.93,180.24 L1022.55,181.58 L1023.18,182.91 L1023.82,184.24 L1024.46,185.56 L1025.11,186.88 L1025.77,188.19 L1026.44,189.50 L1027.12,190.81 L1027.80,192.11 L1028.50,193.41 L1029.20,194.70 L1029.91,195.98 L1030.63,197.27 L1031.36,198.54 L1032.10,199.81 L1032.85,201.08 L1033.61,202.34 L1034.38,203.60 L1035.16,204.85 L1035.96,206.09 L1036.76,207.33 L1037.57,208.57 L1038.40,209.79 L1039.23,211.02 L1040.08,212.23 L1040.94,213.44 L1041.80,214.65 L1042.68,215.85 L1043.56,217.05 L1044.45,218.25 L1045.36,219.43 L1046.26,220.62 L1047.18,221.80 L1048.11,222.98 L1049.04,224.15 L1049.97,225.33 L1050.92,226.49 L1051.86,227.66 L1052.82,228.82 L1053.78,229.98 L1054.74,231.14 L1055.71,232.30 L1056.68,233.45 L1057.66,234.60 L1058.63,235.76 L1059.62,236.91 L1060.60,238.06 L1061.59,239.20 L1062.57,240.35 L1063.56,241.50 L1064.55,242.64 L1065.54,243.79 L1066.53,244.94 L1067.52,246.09 L1068.51,247.23 L1069.50,248.38 L1070.49,249.53 L1071.47,250.68 L1072.46,251.83 L1073.44,252.98 L1074.42,254.14 L1075.39,255.30 L1076.37,256.45 L1077.34,257.61 L1078.30,258.78 L1079.26,259.94 L1080.22,261.11 L1081.17,262.28 L1082.11,263.46 L1083.05,264.64 L1083.98,265.82 L1084.91,267.00 L1085.82,268.19 L1086.73,269.38 L1087.64,270.58 L1088.53,271.79 L1089.42,272.99 L1090.30,274.20 L1091.16,275.42 L1092.02,276.64 L1092.87,277.87 L1093.71,279.11 L1094.54,280.35 L1095.35,281.59 L1096.16,282.84 L1096.95,284.10 L1097.73,285.37 L1098.50,286.64 L1099.25,287.92 L1100.00,289.20 L1100.73,290.49 L1101.45,291.79 L1102.16,293.10 L1102.86,294.41 L1103.55,295.72 L1104.23,297.04 L1104.90,298.37 L1105.55,299.70 L1106.20,301.04 L1106.85,302.38 L1107.48,303.73 L1108.10,305.08 L1108.72,306.43 L1109.33,307.79 L1109.93,309.16 L1110.53,310.53 L1111.12,311.90 L1111.70,313.27 L1112.28,314.65 L1112.85,316.03 L1113.42,317.42 L1113.98,318.80 L1114.54,320.19 L1115.09,321.59 L1115.64,322.98 L1116.18,324.38 L1116.73,325.78 L1117.26,327.18 L1117.80,328.58 L1118.34,329.99 L1118.87,331.39 L1119.40,332.80 L1119.93,334.21 L1120.46,335.61 L1120.99,337.02 L1121.51,338.43 L1122.04,339.84 L1122.57,341.25 L1123.10,342.66 L1123.63,344.07 L1124.16,345.48 L1124.69,346.89 L1125.23,348.30 L1125.76,349.71 L1126.30,351.11 L1126.85,352.52 L1127.39,353.92 L1127.94,355.33 L1128.50,356.73 L1129.05,358.12 L1129.62,359.52 L1130.18,360.92 L1130.76,362.31 L1131.34,363.70 L1131.92,365.08 L1132.51,366.47 L1133.11,367.85 L1133.71,369.23 L1134.32,370.60 L1134.94,371.97 L1135.57,373.34 L1136.20,374.70 L1136.84,376.06 L1137.50,377.41 L1138.16,378.76 L1138.83,380.11 L1139.51,381.45 L1140.20,382.78 L1140.90,384.12 L1141.61,385.44 L1142.33,386.76 L1143.06,388.08 L1143.80,389.39 L1144.55,390.69 L1145.31,391.99 L1146.08,393.29 L1146.86,394.57 L1147.64,395.86 L1148.44,397.13 L1149.25,398.41 L1150.07,399.67 L1150.90,400.93 L1151.73,402.19 L1152.58,403.43 L1153.43,404.68 L1154.30,405.91 L1155.17,407.14 L1156.05,408.36 L1156.95,409.58 L1157.85,410.79 L1158.76,412.00 L1159.68,413.19 L1160.61,414.39 L1161.55,415.57 L1162.49,416.75 L1163.45,417.92 L1164.42,419.08 L1165.39,420.24 L1166.37,421.39 L1167.36,422.53 L1168.37,423.67 L1169.37,424.80 L1170.39,425.92 L1171.42,427.04 L1172.46,428.14 L1173.50,429.24 L1174.55,430.34 L1175.61,431.42 L1176.68,432.50 L1177.76,433.57 L1178.85,434.63 L1179.94,435.68 L1181.05,436.73 L1182.16,437.77 L1183.28,438.80 L1184.41,439.82 L1185.54,440.83 L1186.69,441.84 L1187.84,442.83 L1189.00,443.82 L1190.17,444.80 L1191.35,445.77 L1192.53,446.74 L1193.73,447.69 L1194.93,448.64 L1196.14,449.57 L1197.35,450.50 L1198.58,451.42 L1199.81,452.33 L1201.05,453.23 L1202.30,454.12 L1203.55,455.01 L1204.81,455.88 L1206.09,456.74 L1207.36,457.60 L1208.65,458.44 L1209.94,459.28 L1211.24,460.10 L1212.54,460.90 L1213.85,461.69 L1215.16,462.45 L1216.48,463.19 L1217.80,463.90 L1219.12,464.58 L1220.44,465.23 L1221.76,465.85 L1223.07,466.43 L1224.39,466.96 L1225.71,467.46 L1227.02,467.91 L1228.33,468.31 L1229.63,468.66 L1230.93,468.96 L1232.22,469.20 L1233.50,469.38 L1234.78,469.50 L1236.04,469.56 L1237.30,469.55 L1238.55,469.48 L1239.78,469.33 L1241.01,469.10 L1242.22,468.80 L1243.42,468.42 L1244.60,467.96 L1245.77,467.42 L1246.92,466.78 L1248.06,466.06 L1249.18,465.25 L1250.28,464.33 L1251.36,463.33 L1252.42,462.22 L1253.47,461.00 L1254.49,459.69 L1255.49,458.26 L1256.46,456.72 L1257.41,455.07 L1258.34,453.30 L1259.24,451.42 L1260.12,449.41" stroke="#38ec38" stroke-width="2.7"/>
</g>
<g shape-rendering="crispEdges">
<rect x="927" y="32" width="3" height="682" fill="#ffff00" />
<rect x="243" y="168" width="7" height="1" fill="#fff" />
<rect x="257" y="168" width="7" height="1" fill="#fff" />
<rect x="253" y="158" width="1" height="7" fill="#fff" />
<rect x="253" y="172" width="1" height="7" fill="#fff" />
</g>
<circle cx="253.5" cy="168.5" r="2.3" fill="none" stroke="#fff" stroke-width="1.2"/>
<circle cx="928.5" cy="246" r="2.5" fill="none" stroke="#c0c0ff" stroke-width="1"/>
<g shape-rendering="crispEdges">
<rect x="1387" y="19" width="1" height="704" fill="#202020" />
<rect x="1388" y="19" width="241" height="704" fill="#ffffff" />
<rect x="1388" y="19" width="241" height="1" fill="url(#dots)" />
<rect x="1628" y="19" width="1" height="21" fill="url(#dots)" />
<rect x="1388" y="40" width="241" height="1" fill="url(#dots)" />
<rect x="1388" y="722" width="243" height="1" fill="#e8e8e8" />
</g>
<rect x="1488" y="21" width="59" height="19" fill="#ffff00" />
<rect x="1568" y="21" width="58" height="19" fill="#ffff00" />
<text transform="translate(1486.36,35.90) scale(1.3600,1)" font-size="17" font-weight="normal" font-style="normal" fill="#000" text-anchor="start" xml:space="preserve">CAP2</text>
<text transform="translate(1566.52,35.90) scale(1.3600,1)" font-size="17" font-weight="normal" font-style="normal" fill="#000" text-anchor="start" xml:space="preserve">SAP5</text>
<defs><clipPath id="lab0"><rect x="1388" y="40" width="88" height="682"/></clipPath><clipPath id="pcl"><rect x="1388" y="240" width="74" height="22"/></clipPath><clipPath id="pc1"><rect x="1462" y="240" width="84" height="22"/></clipPath></defs>
<text transform="translate(1392.00,57.50) scale(1.3600,1)" font-size="17" font-weight="normal" font-style="normal" fill="#000" text-anchor="start" xml:space="preserve">Time</text>
<rect x="1499.62" y="41.5" width="47.88" height="22" fill="#ffffff" />
<text transform="translate(1501.62,57.50) scale(1.3600,1)" font-size="17" font-weight="normal" font-style="normal" fill="#000" text-anchor="start" xml:space="preserve">4.50</text>
<text transform="translate(1580.12,57.50) scale(1.3600,1)" font-size="17" font-weight="normal" font-style="normal" fill="#000" text-anchor="start" xml:space="preserve">4.42</text>
<text transform="translate(1390.64,79.50) scale(1.3600,1)" font-size="17" font-weight="normal" font-style="normal" fill="#000" text-anchor="start" xml:space="preserve">Hubrpm</text>
<rect x="1476.5" y="63.5" width="71.0" height="22" fill="#ffffff" />
<text transform="translate(1477.14,79.50) scale(1.3600,1)" font-size="17" font-weight="normal" font-style="normal" fill="#000" text-anchor="start" xml:space="preserve">967.33</text>
<text transform="translate(1555.64,79.50) scale(1.3600,1)" font-size="17" font-weight="normal" font-style="normal" fill="#000" text-anchor="start" xml:space="preserve">967.33</text>
<text transform="translate(1390.64,101.50) scale(1.3600,1)" font-size="17" font-weight="normal" font-style="normal" fill="#000" text-anchor="start" xml:space="preserve">EngRPM</text>
<rect x="1495.54" y="85.5" width="51.96" height="22" fill="#ffffff" />
<text transform="translate(1496.18,101.50) scale(1.3600,1)" font-size="17" font-weight="normal" font-style="normal" fill="#000" text-anchor="start" xml:space="preserve">5330</text>
<text transform="translate(1574.68,101.50) scale(1.3600,1)" font-size="17" font-weight="normal" font-style="normal" fill="#000" text-anchor="start" xml:space="preserve">5330</text>
<text transform="translate(1392.00,123.50) scale(1.3600,1)" font-size="17" font-weight="normal" font-style="normal" fill="#000" text-anchor="start" xml:space="preserve">AxleTorc</text>
<rect x="1476.5" y="107.5" width="71.0" height="22" fill="#ffffff" />
<text transform="translate(1477.14,123.50) scale(1.3600,1)" font-size="17" font-weight="normal" font-style="normal" fill="#000" text-anchor="start" xml:space="preserve">1384.3</text>
<text transform="translate(1555.64,123.50) scale(1.3600,1)" font-size="17" font-weight="normal" font-style="normal" fill="#000" text-anchor="start" xml:space="preserve">1288.8</text>
<text transform="translate(1392.00,145.50) scale(1.3600,1)" font-size="17" font-weight="normal" font-style="normal" fill="#000" text-anchor="start" xml:space="preserve">AxleTorc</text>
<rect x="1476.5" y="129.5" width="71.0" height="22" fill="#ffffff" />
<text transform="translate(1477.14,145.50) scale(1.3600,1)" font-size="17" font-weight="normal" font-style="normal" fill="#000" text-anchor="start" xml:space="preserve">1384.3</text>
<text transform="translate(1555.64,145.50) scale(1.3600,1)" font-size="17" font-weight="normal" font-style="normal" fill="#000" text-anchor="start" xml:space="preserve">1288.8</text>
<text transform="translate(1392.00,167.50) scale(1.3600,1)" font-size="17" font-weight="normal" font-style="normal" fill="#000" text-anchor="start" xml:space="preserve">AxleTorqS</text>
<rect x="1514.58" y="151.5" width="32.92" height="22" fill="#ffffff" />
<text transform="translate(1515.22,167.50) scale(1.3600,1)" font-size="17" font-weight="normal" font-style="normal" fill="#000" text-anchor="start" xml:space="preserve">0.0</text>
<text transform="translate(1593.72,167.50) scale(1.3600,1)" font-size="17" font-weight="normal" font-style="normal" fill="#000" text-anchor="start" xml:space="preserve">0.0</text>
<rect x="1391" y="174.0" width="74" height="21.7" fill="#00e8f8" />
<text transform="translate(1392.00,189.50) scale(1.3600,1)" font-size="17" font-weight="normal" font-style="normal" fill="#000" text-anchor="start" xml:space="preserve">Torque</text>
<rect x="1483" y="174.0" width="64" height="21.7" fill="#00e8f8" />
<rect x="1562" y="174.0" width="64" height="21.7" fill="#00e8f8" />
<text transform="translate(1489.38,189.50) scale(1.3600,1)" font-size="17" font-weight="normal" font-style="normal" fill="#000" text-anchor="start" xml:space="preserve">251.2</text>
<text transform="translate(1567.88,189.50) scale(1.3600,1)" font-size="17" font-weight="normal" font-style="normal" fill="#000" text-anchor="start" xml:space="preserve">233.9</text>
<text transform="translate(1392.00,211.50) scale(1.3600,1)" font-size="17" font-weight="normal" font-style="normal" fill="#000" text-anchor="start" xml:space="preserve">AxlePow</text>
<rect x="1488.74" y="195.5" width="58.760000000000005" height="22" fill="#ffffff" />
<text transform="translate(1489.38,211.50) scale(1.3600,1)" font-size="17" font-weight="normal" font-style="normal" fill="#000" text-anchor="start" xml:space="preserve">255.0</text>
<text transform="translate(1567.88,211.50) scale(1.3600,1)" font-size="17" font-weight="normal" font-style="normal" fill="#000" text-anchor="start" xml:space="preserve">237.4</text>
<rect x="1391" y="218.0" width="65" height="21.7" fill="#00e000" />
<text transform="translate(1390.64,233.50) scale(1.3600,1)" font-size="17" font-weight="normal" font-style="normal" fill="#000" text-anchor="start" xml:space="preserve">Power</text>
<rect x="1483" y="218.0" width="64" height="21.7" fill="#00e000" />
<rect x="1562" y="218.0" width="64" height="21.7" fill="#00e000" />
<text transform="translate(1489.38,233.50) scale(1.3600,1)" font-size="17" font-weight="normal" font-style="normal" fill="#000" text-anchor="start" xml:space="preserve">255.0</text>
<text transform="translate(1567.88,233.50) scale(1.3600,1)" font-size="17" font-weight="normal" font-style="normal" fill="#000" text-anchor="start" xml:space="preserve">237.4</text>
<text transform="translate(1390.64,255.50) scale(1.3600,1)" font-size="17" font-weight="normal" font-style="normal" fill="#000" text-anchor="start" xml:space="preserve">PCRati</text>
<rect x="1463" y="239.5" width="84" height="22" fill="#ffffff" />
<g clip-path="url(#pc1)"><text transform="translate(1462.53,255.50) scale(1.4700,1)" font-size="17" font-weight="normal" font-style="normal" fill="#000" text-anchor="start" xml:space="preserve">1.00000</text></g>
<rect x="1547" y="239.5" width="80" height="22" fill="#ffffff" />
<text transform="translate(1542.04,255.50) scale(1.3600,1)" font-size="17" font-weight="normal" font-style="normal" fill="#000" text-anchor="start" xml:space="preserve">1.00000</text>
<text transform="translate(1390.64,277.50) scale(1.3600,1)" font-size="17" font-weight="normal" font-style="normal" fill="#000" text-anchor="start" xml:space="preserve">MAP</text>
<rect x="1488.74" y="261.5" width="58.760000000000005" height="22" fill="#ffffff" />
<text transform="translate(1489.38,277.50) scale(1.3600,1)" font-size="17" font-weight="normal" font-style="normal" fill="#000" text-anchor="start" xml:space="preserve">18.81</text>
<text transform="translate(1567.88,277.50) scale(1.3600,1)" font-size="17" font-weight="normal" font-style="normal" fill="#000" text-anchor="start" xml:space="preserve">18.16</text>
<text transform="translate(1392.00,299.50) scale(1.3600,1)" font-size="17" font-weight="normal" font-style="normal" fill="#000" text-anchor="start" xml:space="preserve">Temp</text>
<rect x="1488.74" y="283.5" width="58.760000000000005" height="22" fill="#ffffff" />
<text transform="translate(1489.38,299.50) scale(1.3600,1)" font-size="17" font-weight="normal" font-style="normal" fill="#000" text-anchor="start" xml:space="preserve">212.3</text>
<text transform="translate(1567.88,299.50) scale(1.3600,1)" font-size="17" font-weight="normal" font-style="normal" fill="#000" text-anchor="start" xml:space="preserve">212.3</text>
<text transform="translate(1392.00,321.50) scale(1.3600,1)" font-size="17" font-weight="normal" font-style="normal" fill="#000" text-anchor="start" xml:space="preserve">AirDens</text>
<rect x="1476.5" y="305.5" width="71.0" height="22" fill="#ffffff" />
<text transform="translate(1477.14,321.50) scale(1.3600,1)" font-size="17" font-weight="normal" font-style="normal" fill="#000" text-anchor="start" xml:space="preserve">0.4418</text>
<text transform="translate(1555.64,321.50) scale(1.3600,1)" font-size="17" font-weight="normal" font-style="normal" fill="#000" text-anchor="start" xml:space="preserve">0.4057</text>
<text transform="translate(1390.64,343.50) scale(1.3600,1)" font-size="17" font-weight="normal" font-style="normal" fill="#000" text-anchor="start" xml:space="preserve">Baro</text>
<rect x="1500.98" y="327.5" width="46.52" height="22" fill="#ffffff" />
<text transform="translate(1501.62,343.50) scale(1.3600,1)" font-size="17" font-weight="normal" font-style="normal" fill="#000" text-anchor="start" xml:space="preserve">29.7</text>
<text transform="translate(1580.12,343.50) scale(1.3600,1)" font-size="17" font-weight="normal" font-style="normal" fill="#000" text-anchor="start" xml:space="preserve">29.7</text>
<text transform="translate(1390.64,365.50) scale(1.3600,1)" font-size="17" font-weight="normal" font-style="normal" fill="#000" text-anchor="start" xml:space="preserve">RelHum</text>
<rect x="1500.98" y="349.5" width="46.52" height="22" fill="#ffffff" />
<text transform="translate(1501.62,365.50) scale(1.3600,1)" font-size="17" font-weight="normal" font-style="normal" fill="#000" text-anchor="start" xml:space="preserve">51.7</text>
<text transform="translate(1580.12,365.50) scale(1.3600,1)" font-size="17" font-weight="normal" font-style="normal" fill="#000" text-anchor="start" xml:space="preserve">55.5</text>
<text transform="translate(1390.64,387.50) scale(1.3600,1)" font-size="17" font-weight="normal" font-style="normal" fill="#000" text-anchor="start" xml:space="preserve">Speed</text>
<rect x="1500.98" y="371.5" width="46.52" height="22" fill="#ffffff" />
<text transform="translate(1501.62,387.50) scale(1.3600,1)" font-size="17" font-weight="normal" font-style="normal" fill="#000" text-anchor="start" xml:space="preserve">78.3</text>
<text transform="translate(1580.12,387.50) scale(1.3600,1)" font-size="17" font-weight="normal" font-style="normal" fill="#000" text-anchor="start" xml:space="preserve">78.3</text>
<text transform="translate(1392.00,409.50) scale(1.3600,1)" font-size="17" font-weight="normal" font-style="normal" fill="#000" text-anchor="start" xml:space="preserve">T.Effort</text>
<rect x="1475.14" y="393.5" width="72.36" height="22" fill="#ffffff" />
<text transform="translate(1475.78,409.50) scale(1.3600,1)" font-size="17" font-weight="normal" font-style="normal" fill="#000" text-anchor="start" xml:space="preserve">1221.4</text>
<text transform="translate(1557.00,409.50) scale(1.3600,1)" font-size="17" font-weight="normal" font-style="normal" fill="#000" text-anchor="start" xml:space="preserve">1137.2</text>
<text transform="translate(1392.00,431.50) scale(1.3600,1)" font-size="17" font-weight="normal" font-style="normal" fill="#000" text-anchor="start" xml:space="preserve">Accel</text>
<rect x="1476.5" y="415.5" width="71.0" height="22" fill="#ffffff" />
<text transform="translate(1477.14,431.50) scale(1.3600,1)" font-size="17" font-weight="normal" font-style="normal" fill="#000" text-anchor="start" xml:space="preserve">0.3957</text>
<text transform="translate(1554.28,431.50) scale(1.3600,1)" font-size="17" font-weight="normal" font-style="normal" fill="#000" text-anchor="start" xml:space="preserve">0.3684</text>
<text transform="translate(1390.64,453.50) scale(1.3600,1)" font-size="17" font-weight="normal" font-style="normal" fill="#000" text-anchor="start" xml:space="preserve">Distance</text>
<rect x="1488.74" y="437.5" width="58.760000000000005" height="22" fill="#ffffff" />
<text transform="translate(1489.38,453.50) scale(1.3600,1)" font-size="17" font-weight="normal" font-style="normal" fill="#000" text-anchor="start" xml:space="preserve">372.4</text>
<text transform="translate(1567.88,453.50) scale(1.3600,1)" font-size="17" font-weight="normal" font-style="normal" fill="#000" text-anchor="start" xml:space="preserve">372.4</text>
<text transform="translate(28.11,786.20) scale(1.2954,1)" font-size="25.5" font-weight="bold" font-style="normal" fill="#000" text-anchor="start" xml:space="preserve">Plot 1 (Solid)</text>
<text transform="translate(335.40,786.20) scale(1.2974,1)" font-size="25.5" font-weight="bold" font-style="normal" fill="#000" text-anchor="start" xml:space="preserve">X Axis</text>
<text transform="translate(476.28,786.20) scale(1.3166,1)" font-size="25.5" font-weight="bold" font-style="normal" fill="#000" text-anchor="start" xml:space="preserve">Y Axis (Left)</text>
<text transform="translate(730.89,786.20) scale(1.3116,1)" font-size="25.5" font-weight="bold" font-style="normal" fill="#000" text-anchor="start" xml:space="preserve">Y Axis (Right)</text>
<text transform="translate(1194.77,786.20) scale(1.3137,1)" font-size="25.5" font-weight="bold" font-style="normal" fill="#000" text-anchor="start" xml:space="preserve">Plot 2 (Dash)</text>
<g shape-rendering="crispEdges">
<rect x="28" y="801" width="21" height="19" fill="#c8c8c8" />
<rect x="28" y="801" width="21" height="1" fill="#ffffff" />
<rect x="28" y="801" width="1" height="19" fill="#ffffff" />
<rect x="28" y="819" width="21" height="1" fill="#808080" />
<rect x="48" y="801" width="1" height="19" fill="#808080" />
<rect x="28" y="820" width="21" height="19" fill="#c8c8c8" />
<rect x="28" y="820" width="21" height="1" fill="#ffffff" />
<rect x="28" y="820" width="1" height="19" fill="#ffffff" />
<rect x="28" y="838" width="21" height="1" fill="#808080" />
<rect x="48" y="820" width="1" height="19" fill="#808080" />
</g>
<path d="M31.0,814.7 L39.5,806 L48.0,814.7 Z" fill="#000"/>
<path d="M31.0,825.1 L39.5,833.9 L48.0,825.1 Z" fill="#000"/>
<g shape-rendering="crispEdges">
<rect x="51" y="802" width="274" height="36" fill="#f4f4f4" />
<rect x="51" y="802" width="273" height="35" fill="#000" />
<rect x="52" y="803" width="272" height="34" fill="#ffff00" />
</g>
<g shape-rendering="crispEdges">
<rect x="333" y="801" width="21" height="19" fill="#c8c8c8" />
<rect x="333" y="801" width="21" height="1" fill="#ffffff" />
<rect x="333" y="801" width="1" height="19" fill="#ffffff" />
<rect x="333" y="819" width="21" height="1" fill="#808080" />
<rect x="353" y="801" width="1" height="19" fill="#808080" />
<rect x="333" y="820" width="21" height="19" fill="#c8c8c8" />
<rect x="333" y="820" width="21" height="1" fill="#ffffff" />
<rect x="333" y="820" width="1" height="19" fill="#ffffff" />
<rect x="333" y="838" width="21" height="1" fill="#808080" />
<rect x="353" y="820" width="1" height="19" fill="#808080" />
</g>
<path d="M336.0,814.7 L344.5,806 L353.0,814.7 Z" fill="#000"/>
<path d="M336.0,825.1 L344.5,833.9 L353.0,825.1 Z" fill="#000"/>
<g shape-rendering="crispEdges">
<rect x="356" y="802" width="108" height="36" fill="#f4f4f4" />
<rect x="356" y="802" width="107" height="35" fill="#000" />
<rect x="357" y="803" width="106" height="34" fill="#ffff00" />
</g>
<g shape-rendering="crispEdges">
<rect x="475" y="801" width="21" height="19" fill="#c8c8c8" />
<rect x="475" y="801" width="21" height="1" fill="#ffffff" />
<rect x="475" y="801" width="1" height="19" fill="#ffffff" />
<rect x="475" y="819" width="21" height="1" fill="#808080" />
<rect x="495" y="801" width="1" height="19" fill="#808080" />
<rect x="475" y="820" width="21" height="19" fill="#c8c8c8" />
<rect x="475" y="820" width="21" height="1" fill="#ffffff" />
<rect x="475" y="820" width="1" height="19" fill="#ffffff" />
<rect x="475" y="838" width="21" height="1" fill="#808080" />
<rect x="495" y="820" width="1" height="19" fill="#808080" />
</g>
<path d="M478.0,814.7 L486.5,806 L495.0,814.7 Z" fill="#000"/>
<path d="M478.0,825.1 L486.5,833.9 L495.0,825.1 Z" fill="#000"/>
<g shape-rendering="crispEdges">
<rect x="498" y="802" width="221" height="36" fill="#f4f4f4" />
<rect x="498" y="802" width="220" height="35" fill="#000" />
<rect x="499" y="803" width="219" height="34" fill="#00ffff" />
</g>
<g shape-rendering="crispEdges">
<rect x="730" y="801" width="21" height="19" fill="#c8c8c8" />
<rect x="730" y="801" width="21" height="1" fill="#ffffff" />
<rect x="730" y="801" width="1" height="19" fill="#ffffff" />
<rect x="730" y="819" width="21" height="1" fill="#808080" />
<rect x="750" y="801" width="1" height="19" fill="#808080" />
<rect x="730" y="820" width="21" height="19" fill="#c8c8c8" />
<rect x="730" y="820" width="21" height="1" fill="#ffffff" />
<rect x="730" y="820" width="1" height="19" fill="#ffffff" />
<rect x="730" y="838" width="21" height="1" fill="#808080" />
<rect x="750" y="820" width="1" height="19" fill="#808080" />
</g>
<path d="M733.0,814.7 L741.5,806 L750.0,814.7 Z" fill="#000"/>
<path d="M733.0,825.1 L741.5,833.9 L750.0,825.1 Z" fill="#000"/>
<g shape-rendering="crispEdges">
<rect x="753" y="802" width="221" height="36" fill="#f4f4f4" />
<rect x="753" y="802" width="220" height="35" fill="#000" />
<rect x="754" y="803" width="219" height="34" fill="#00ff00" />
</g>
<g shape-rendering="crispEdges">
<rect x="1196" y="801" width="21" height="19" fill="#c8c8c8" />
<rect x="1196" y="801" width="21" height="1" fill="#ffffff" />
<rect x="1196" y="801" width="1" height="19" fill="#ffffff" />
<rect x="1196" y="819" width="21" height="1" fill="#808080" />
<rect x="1216" y="801" width="1" height="19" fill="#808080" />
<rect x="1196" y="820" width="21" height="19" fill="#c8c8c8" />
<rect x="1196" y="820" width="21" height="1" fill="#ffffff" />
<rect x="1196" y="820" width="1" height="19" fill="#ffffff" />
<rect x="1196" y="838" width="21" height="1" fill="#808080" />
<rect x="1216" y="820" width="1" height="19" fill="#808080" />
</g>
<path d="M1199.0,814.7 L1207.5,806 L1216.0,814.7 Z" fill="#000"/>
<path d="M1199.0,825.1 L1207.5,833.9 L1216.0,825.1 Z" fill="#000"/>
<g shape-rendering="crispEdges">
<rect x="1218" y="802" width="275" height="36" fill="#f4f4f4" />
<rect x="1218" y="802" width="274" height="35" fill="#000" />
<rect x="1219" y="803" width="273" height="34" fill="#ffff00" />
</g>
<text transform="translate(52.90,828.80) scale(1.2958,1)" font-size="25" font-weight="normal" font-style="normal" fill="#000" text-anchor="start" xml:space="preserve">Comparison AP 2</text>
<defs><clipPath id="engclip"><rect x="357" y="803" width="105" height="34"/></clipPath></defs>
<g clip-path="url(#engclip)"><text transform="translate(357.13,828.80) scale(1.2830,1)" font-size="25" font-weight="normal" font-style="normal" fill="#000" text-anchor="start" xml:space="preserve">Eng rpm</text></g>
<text transform="translate(503.20,828.80) scale(1.2830,1)" font-size="25" font-weight="normal" font-style="normal" fill="#000" text-anchor="start" xml:space="preserve">Torque</text>
<text transform="translate(754.93,828.80) scale(1.2830,1)" font-size="25" font-weight="normal" font-style="normal" fill="#000" text-anchor="start" xml:space="preserve">Power</text>
<text transform="translate(1219.32,828.80) scale(1.2830,1)" font-size="25" font-weight="normal" font-style="normal" fill="#000" text-anchor="start" xml:space="preserve">Source AP 5</text>
<text transform="translate(974.88,777.50) scale(1.4200,1)" font-size="17.5" font-weight="bold" font-style="normal" fill="#000" text-anchor="start" xml:space="preserve">Show</text>
<text transform="translate(974.88,800.70) scale(1.4200,1)" font-size="17.5" font-weight="bold" font-style="normal" fill="#000" text-anchor="start" xml:space="preserve">Ave.</text>
<text transform="translate(1047.88,777.50) scale(1.4200,1)" font-size="17.5" font-weight="bold" font-style="normal" fill="#000" text-anchor="start" xml:space="preserve">Show</text>
<text transform="translate(1048.58,800.70) scale(1.4200,1)" font-size="17.5" font-weight="bold" font-style="normal" fill="#000" text-anchor="start" xml:space="preserve">Data</text>
<text transform="translate(1110.98,800.70) scale(1.4200,1)" font-size="17.5" font-weight="bold" font-style="normal" fill="#000" text-anchor="start" xml:space="preserve">Cursor</text>
<text transform="translate(1111.68,777.50) scale(1.4200,1)" font-size="17.5" font-weight="bold" font-style="normal" fill="#000" text-anchor="start" xml:space="preserve">Lock</text>
<g shape-rendering="crispEdges">
<rect x="992.5" y="814.7" width="33" height="28" fill="#f0f0f0" />
<rect x="992.5" y="814.7" width="32" height="2" fill="#000" />
<rect x="992.5" y="814.7" width="2" height="27" fill="#000" />
<rect x="994.5" y="816.7" width="30" height="25" fill="#ffffff" />
</g>
<g shape-rendering="crispEdges">
<rect x="1067.5" y="814.7" width="33" height="28" fill="#f0f0f0" />
<rect x="1067.5" y="814.7" width="32" height="2" fill="#000" />
<rect x="1067.5" y="814.7" width="2" height="27" fill="#000" />
<rect x="1069.5" y="816.7" width="30" height="25" fill="#ffffff" />
</g>
<path d="M1072.0,824.9000000000001 L1079.5,832.2 L1094.8,817.1 L1094.9,824.6 L1079.5,840.0 L1072.0,832.7 Z" fill="#000"/>
<g shape-rendering="crispEdges">
<rect x="1135" y="814.7" width="33" height="28" fill="#f0f0f0" />
<rect x="1135" y="814.7" width="32" height="2" fill="#000" />
<rect x="1135" y="814.7" width="2" height="27" fill="#000" />
<rect x="1137" y="816.7" width="30" height="25" fill="#ffffff" />
</g>
<path d="M1139.5,824.9000000000001 L1147,832.2 L1162.3,817.1 L1162.4,824.6 L1147,840.0 L1139.5,832.7 Z" fill="#000"/>
<text transform="translate(29.08,878.60) scale(1.3236,1)" font-size="22" font-weight="bold" font-style="normal" fill="#000" text-anchor="start" xml:space="preserve">Folder:</text>
<text transform="translate(29.06,920.40) scale(1.3440,1)" font-size="22" font-weight="bold" font-style="normal" fill="#000" text-anchor="start" xml:space="preserve">Run ID:</text>
<text transform="translate(29.07,963.80) scale(1.3308,1)" font-size="22" font-weight="bold" font-style="normal" fill="#000" text-anchor="start" xml:space="preserve">Date:</text>
<text transform="translate(1196.08,878.00) scale(1.3236,1)" font-size="22" font-weight="bold" font-style="normal" fill="#000" text-anchor="start" xml:space="preserve">Folder:</text>
<text transform="translate(1196.06,920.00) scale(1.3440,1)" font-size="22" font-weight="bold" font-style="normal" fill="#000" text-anchor="start" xml:space="preserve">Run ID:</text>
<text transform="translate(1196.07,963.00) scale(1.3308,1)" font-size="22" font-weight="bold" font-style="normal" fill="#000" text-anchor="start" xml:space="preserve">Date:</text>
<g shape-rendering="crispEdges">
<rect x="145" y="855" width="257" height="30" fill="#f0f0f0" />
<rect x="145" y="855" width="256" height="29" fill="#000" />
<rect x="146" y="856" width="255" height="28" fill="#ffffcc" />
</g>
<g shape-rendering="crispEdges">
<rect x="145" y="897" width="306" height="30" fill="#f0f0f0" />
<rect x="145" y="897" width="305" height="29" fill="#000" />
<rect x="146" y="898" width="304" height="28" fill="#ffffcc" />
</g>
<g shape-rendering="crispEdges">
<rect x="145" y="940" width="306" height="30" fill="#f0f0f0" />
<rect x="145" y="940" width="305" height="29" fill="#000" />
<rect x="146" y="941" width="304" height="28" fill="#ffffcc" />
</g>
<g shape-rendering="crispEdges">
<rect x="1309" y="855" width="256" height="30" fill="#f0f0f0" />
<rect x="1309" y="855" width="255" height="29" fill="#000" />
<rect x="1310" y="856" width="254" height="28" fill="#ffffcc" />
</g>
<g shape-rendering="crispEdges">
<rect x="1309" y="897" width="306" height="30" fill="#f0f0f0" />
<rect x="1309" y="897" width="305" height="29" fill="#000" />
<rect x="1310" y="898" width="304" height="28" fill="#ffffcc" />
</g>
<g shape-rendering="crispEdges">
<rect x="1309" y="939" width="306" height="30" fill="#f0f0f0" />
<rect x="1309" y="939" width="305" height="29" fill="#000" />
<rect x="1310" y="940" width="304" height="28" fill="#ffffcc" />
</g>
<text transform="translate(146.39,877.00) scale(1.3068,1)" font-size="22" font-weight="normal" font-style="normal" fill="#000" text-anchor="start" xml:space="preserve">hps_15mustangeco</text>
<text transform="translate(146.39,918.50) scale(1.3068,1)" font-size="22" font-weight="normal" font-style="normal" fill="#000" text-anchor="start" xml:space="preserve">5 hps ic pipes</text>
<text transform="translate(146.39,961.00) scale(1.3068,1)" font-size="22" font-weight="normal" font-style="normal" fill="#000" text-anchor="start" xml:space="preserve">06-Jan-2017  15:37:50</text>
<text transform="translate(1310.29,877.00) scale(1.3068,1)" font-size="22" font-weight="normal" font-style="normal" fill="#000" text-anchor="start" xml:space="preserve">hps_15mustangeco</text>
<text transform="translate(1310.29,918.50) scale(1.3068,1)" font-size="22" font-weight="normal" font-style="normal" fill="#000" text-anchor="start" xml:space="preserve">3 STOCK</text>
<text transform="translate(1310.29,960.50) scale(1.3068,1)" font-size="22" font-weight="normal" font-style="normal" fill="#000" text-anchor="start" xml:space="preserve">06-Jan-2017  14:13:53</text>
<g shape-rendering="crispEdges">
<rect x="464" y="847" width="723" height="129" fill="#ffffff" />
</g>
<svg x="470" y="850" width="420" height="125" viewBox="0 0 1639 488" preserveAspectRatio="none">
<path d="M235,78 L385,78 L341,170 L461,170 L505,78 L655,78 L535,330 L385,330 L440,215 L320,215 L265,330 L115,330 Z" fill="#0a0a0a" stroke="#0a0a0a" stroke-width="6" stroke-linejoin="round"/>
<path d="M680,78 L1000,78 C1075,78 1095,110 1082,150 C1068,198 1020,215 960,215 L795,215 L720,330 L563,330 Z M822,125 L900,125 C925,125 925,150 908,162 C900,168 890,170 880,170 L800,170 Z" fill="#0a0a0a" fill-rule="evenodd" stroke="#0a0a0a" stroke-width="6" stroke-linejoin="round"/>
<path d="M88,412 L112,358 L1250,355 L1100,215 C1080,195 1082,150 1130,115 C1170,85 1240,78 1310,78 L1590,80 C1600,80 1600,86 1597,92 L1577,130 C1573,136 1567,138 1558,138 L1340,138 L1480,265 C1530,310 1515,360 1462,385 C1420,405 1350,412 1280,412 Z" fill="#ee1c24" stroke="#000" stroke-width="8" stroke-linejoin="round"/>
</svg>
<text transform="translate(891,902.5) scale(0.99,1)" font-size="37.5" font-weight="bold" font-style="italic" fill="#fff" stroke="#000" stroke-width="6" paint-order="stroke" stroke-linejoin="round" letter-spacing="-1.8">PERFORMANCE</text>
<text transform="translate(891,951.5) scale(1.0,1)" font-size="37.5" font-weight="bold" font-style="italic" fill="#fff" stroke="#000" stroke-width="6" paint-order="stroke" stroke-linejoin="round" letter-spacing="-1.8">PRODUCTS</text>
</svg></body></html>
